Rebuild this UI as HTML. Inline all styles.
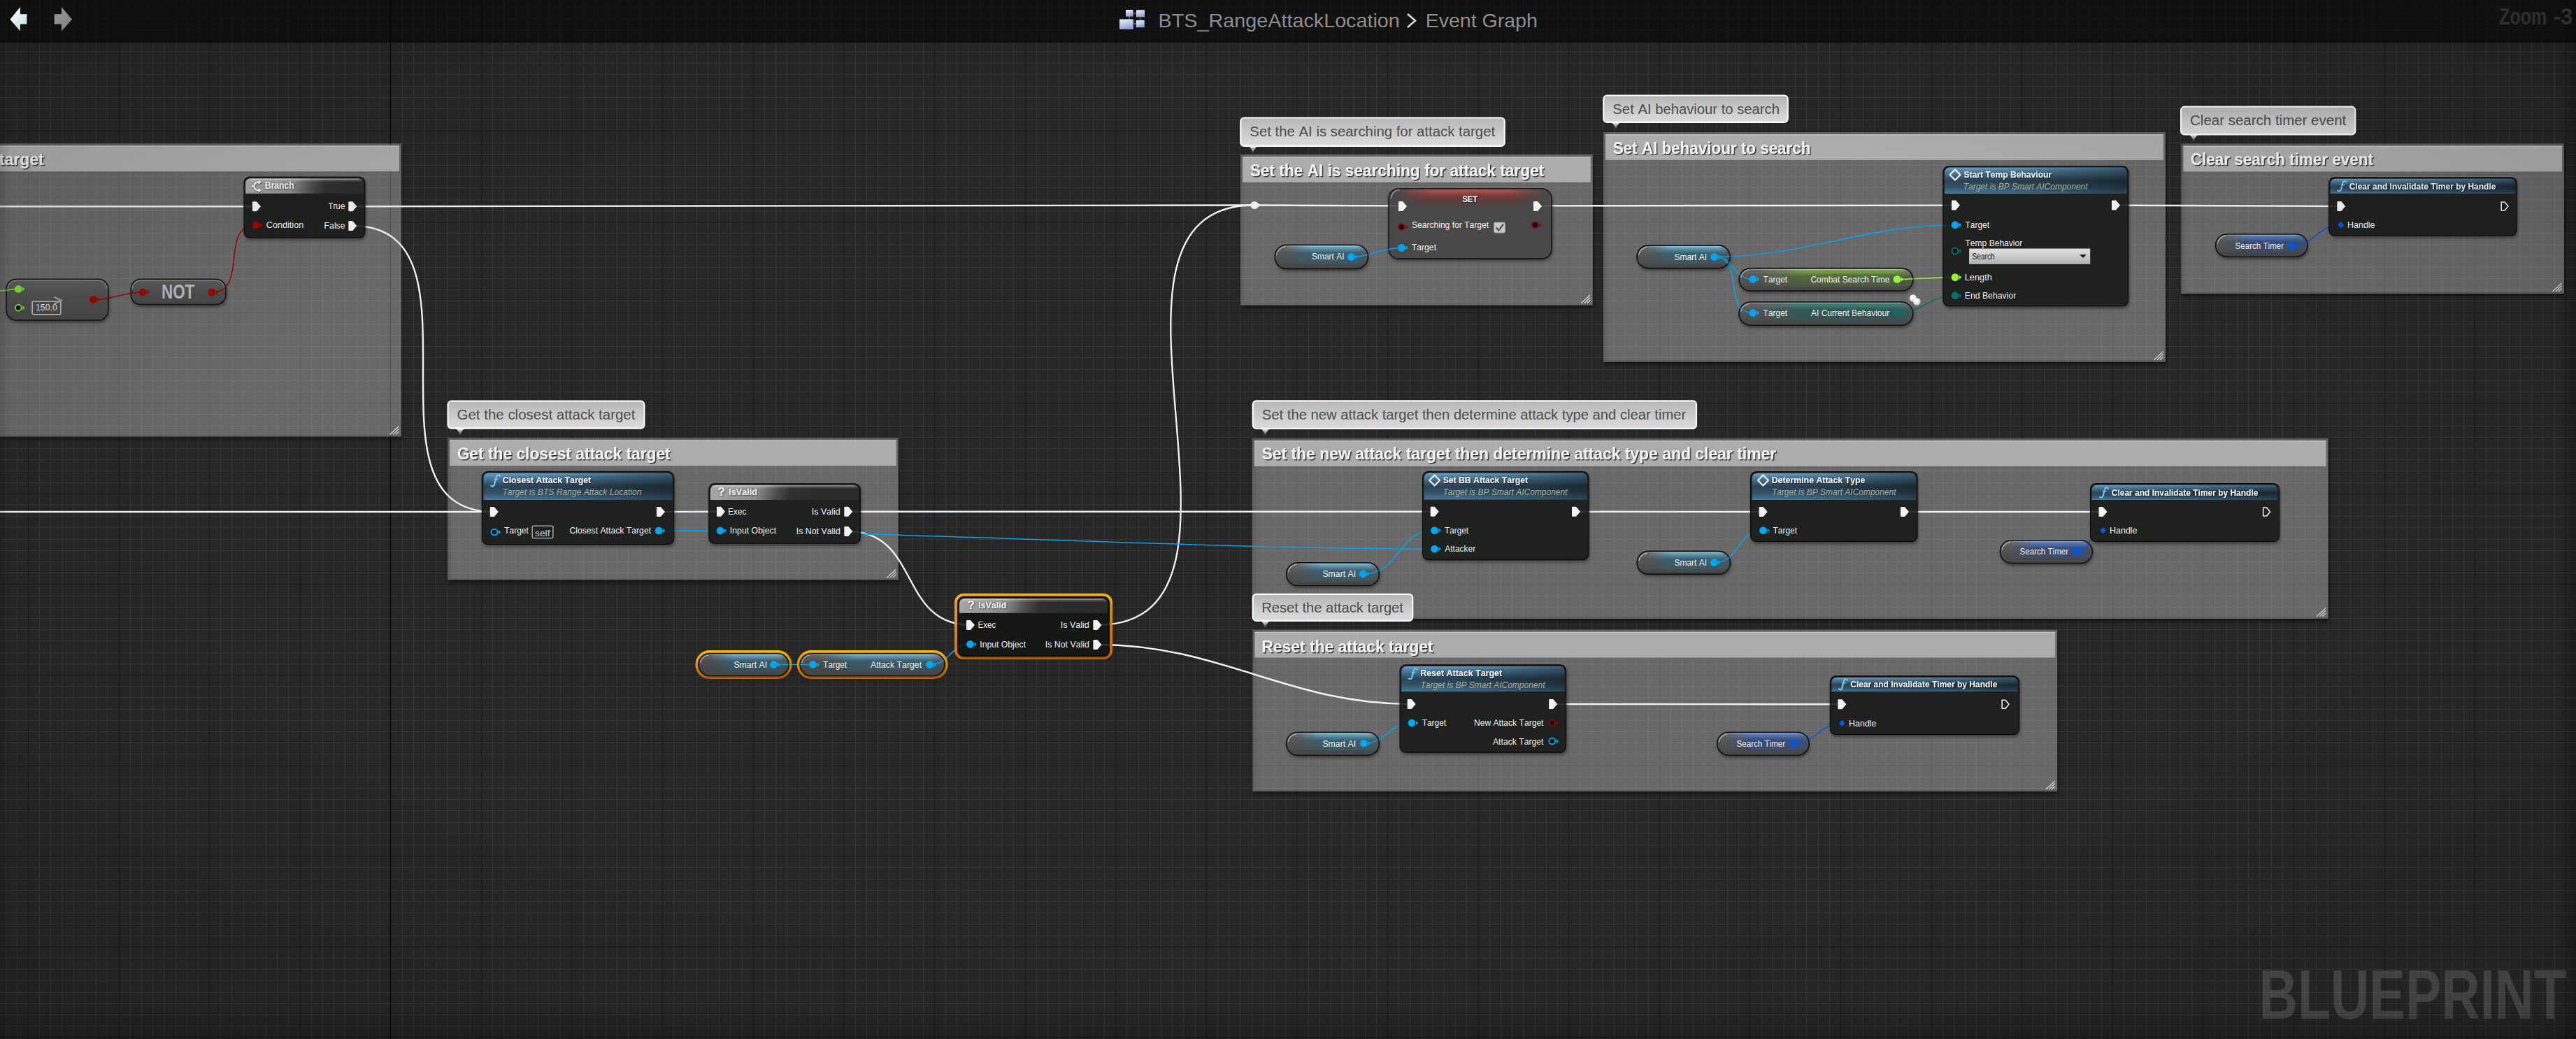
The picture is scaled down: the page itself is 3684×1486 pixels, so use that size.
<!DOCTYPE html><html><head><meta charset="utf-8"><style>html,body{margin:0;padding:0;width:3684px;height:1486px;overflow:hidden;background:#262626}svg{display:block}text{font-family:"Liberation Sans",sans-serif;font-kerning:none}</style></head><body><svg width="3684" height="1486" viewBox="0 0 3684 1486">
<defs>
 <linearGradient id="gBubble" x1="0" y1="0" x2="0" y2="1">
  <stop offset="0" stop-color="#b6b6b6"/><stop offset="1" stop-color="#dddddd"/>
 </linearGradient>
 <linearGradient id="gFunc" x1="0" y1="0" x2="0" y2="1">
  <stop offset="0" stop-color="#6ea6cc"/><stop offset="0.12" stop-color="#5587aa"/>
  <stop offset="0.5" stop-color="#2c4555"/><stop offset="0.75" stop-color="#34536a"/>
  <stop offset="1" stop-color="#4d7997"/>
 </linearGradient>
 <linearGradient id="gFuncH" x1="0" y1="0" x2="1" y2="0">
  <stop offset="0" stop-color="#000" stop-opacity="0"/><stop offset="0.4" stop-color="#000" stop-opacity="0.1"/>
  <stop offset="1" stop-color="#000" stop-opacity="0.42"/>
 </linearGradient>
 <linearGradient id="gPure" x1="0" y1="0" x2="1" y2="0.25">
  <stop offset="0" stop-color="#8c8c8c"/><stop offset="0.22" stop-color="#767676"/>
  <stop offset="0.45" stop-color="#3a3a3a"/><stop offset="0.6" stop-color="#2c2c2c"/>
  <stop offset="1" stop-color="#2a2a2a"/>
 </linearGradient>
 <linearGradient id="gTopHi" x1="0" y1="0" x2="0" y2="1">
  <stop offset="0" stop-color="#fff" stop-opacity="0.35"/><stop offset="0.25" stop-color="#fff" stop-opacity="0"/>
 </linearGradient>
 <linearGradient id="gCompact" x1="0" y1="0" x2="0" y2="1">
  <stop offset="0" stop-color="#5a5a5a"/><stop offset="0.5" stop-color="#4a4a4a"/><stop offset="1" stop-color="#424242"/>
 </linearGradient>
 <linearGradient id="gVar" x1="0" y1="0" x2="0" y2="1">
  <stop offset="0" stop-color="#6c6c6c"/><stop offset="0.35" stop-color="#535353"/><stop offset="1" stop-color="#434343"/>
 </linearGradient>
 <linearGradient id="gHoriz" x1="0" y1="0" x2="1" y2="0">
  <stop offset="0" stop-color="#fff" stop-opacity="0"/><stop offset="0.1" stop-color="#fff" stop-opacity="0.05"/><stop offset="0.38" stop-color="#fff" stop-opacity="1"/>
  <stop offset="0.9" stop-color="#fff" stop-opacity="1"/><stop offset="1" stop-color="#fff" stop-opacity="0.4"/>
 </linearGradient>
 <mask id="mHoriz" maskContentUnits="objectBoundingBox"><rect width="1" height="1" fill="url(#gHoriz)"/></mask>
 <linearGradient id="gSetH" x1="0" y1="0" x2="1" y2="0">
  <stop offset="0" stop-color="#fff" stop-opacity="0"/><stop offset="0.25" stop-color="#fff" stop-opacity="1"/>
  <stop offset="0.75" stop-color="#fff" stop-opacity="1"/><stop offset="1" stop-color="#fff" stop-opacity="0"/>
 </linearGradient>
 <mask id="mSetH" maskContentUnits="objectBoundingBox"><rect width="1" height="1" fill="url(#gSetH)"/></mask>
 <radialGradient id="gSet" cx="0.5" cy="0" r="0.6" fx="0.5" fy="0">
  <stop offset="0" stop-color="#b84848"/><stop offset="0.5" stop-color="#7a3030"/><stop offset="1" stop-color="#3c3c3c" stop-opacity="0"/>
 </radialGradient>
 <linearGradient id="gOrange" x1="0" y1="0" x2="0" y2="1">
  <stop offset="0" stop-color="#f7b400"/><stop offset="1" stop-color="#e27400"/>
 </linearGradient>
 <filter id="fShadow" x="-10%" y="-10%" width="120%" height="130%">
  <feGaussianBlur stdDeviation="2.5"/>
 </filter>
 <filter id="fNodeTxt" x="-10%" y="-30%" width="130%" height="170%">
  <feDropShadow dx="0.8" dy="1" stdDeviation="1.2" flood-color="#000" flood-opacity="0.55"/>
 </filter>
 <filter id="fTxtSh" x="-5%" y="-20%" width="110%" height="150%">
  <feDropShadow dx="1.5" dy="1.5" stdDeviation="0.6" flood-color="#222" flood-opacity="0.9"/>
 </filter>
</defs>
<rect width="3684" height="1486" fill="#262626"/>
<path d="M8.5,0V1486M24.5,0V1486M56.5,0V1486M72.5,0V1486M89.5,0V1486M105.5,0V1486M121.5,0V1486M137.5,0V1486M153.5,0V1486M186.5,0V1486M202.5,0V1486M218.5,0V1486M234.5,0V1486M251.5,0V1486M267.5,0V1486M283.5,0V1486M315.5,0V1486M331.5,0V1486M348.5,0V1486M364.5,0V1486M380.5,0V1486M396.5,0V1486M412.5,0V1486M445.5,0V1486M461.5,0V1486M477.5,0V1486M493.5,0V1486M510.5,0V1486M526.5,0V1486M542.5,0V1486M575.5,0V1486M591.5,0V1486M607.5,0V1486M623.5,0V1486M639.5,0V1486M656.5,0V1486M672.5,0V1486M704.5,0V1486M720.5,0V1486M737.5,0V1486M753.5,0V1486M769.5,0V1486M785.5,0V1486M801.5,0V1486M834.5,0V1486M850.5,0V1486M866.5,0V1486M882.5,0V1486M898.5,0V1486M915.5,0V1486M931.5,0V1486M963.5,0V1486M979.5,0V1486M996.5,0V1486M1012.5,0V1486M1028.5,0V1486M1044.5,0V1486M1061.5,0V1486M1093.5,0V1486M1109.5,0V1486M1125.5,0V1486M1142.5,0V1486M1158.5,0V1486M1174.5,0V1486M1190.5,0V1486M1223.5,0V1486M1239.5,0V1486M1255.5,0V1486M1271.5,0V1486M1287.5,0V1486M1304.5,0V1486M1320.5,0V1486M1352.5,0V1486M1368.5,0V1486M1385.5,0V1486M1401.5,0V1486M1417.5,0V1486M1433.5,0V1486M1449.5,0V1486M1482.5,0V1486M1498.5,0V1486M1514.5,0V1486M1530.5,0V1486M1547.5,0V1486M1563.5,0V1486M1579.5,0V1486M1611.5,0V1486M1628.5,0V1486M1644.5,0V1486M1660.5,0V1486M1676.5,0V1486M1692.5,0V1486M1709.5,0V1486M1741.5,0V1486M1757.5,0V1486M1773.5,0V1486M1790.5,0V1486M1806.5,0V1486M1822.5,0V1486M1838.5,0V1486M1871.5,0V1486M1887.5,0V1486M1903.5,0V1486M1919.5,0V1486M1935.5,0V1486M1952.5,0V1486M1968.5,0V1486M2000.5,0V1486M2016.5,0V1486M2033.5,0V1486M2049.5,0V1486M2065.5,0V1486M2081.5,0V1486M2097.5,0V1486M2130.5,0V1486M2146.5,0V1486M2162.5,0V1486M2178.5,0V1486M2195.5,0V1486M2211.5,0V1486M2227.5,0V1486M2259.5,0V1486M2276.5,0V1486M2292.5,0V1486M2308.5,0V1486M2324.5,0V1486M2340.5,0V1486M2357.5,0V1486M2389.5,0V1486M2405.5,0V1486M2421.5,0V1486M2438.5,0V1486M2454.5,0V1486M2470.5,0V1486M2486.5,0V1486M2519.5,0V1486M2535.5,0V1486M2551.5,0V1486M2567.5,0V1486M2583.5,0V1486M2600.5,0V1486M2616.5,0V1486M2648.5,0V1486M2664.5,0V1486M2681.5,0V1486M2697.5,0V1486M2713.5,0V1486M2729.5,0V1486M2745.5,0V1486M2778.5,0V1486M2794.5,0V1486M2810.5,0V1486M2826.5,0V1486M2843.5,0V1486M2859.5,0V1486M2875.5,0V1486M2907.5,0V1486M2924.5,0V1486M2940.5,0V1486M2956.5,0V1486M2972.5,0V1486M2988.5,0V1486M3005.5,0V1486M3037.5,0V1486M3053.5,0V1486M3069.5,0V1486M3086.5,0V1486M3102.5,0V1486M3118.5,0V1486M3134.5,0V1486M3167.5,0V1486M3183.5,0V1486M3199.5,0V1486M3215.5,0V1486M3231.5,0V1486M3248.5,0V1486M3264.5,0V1486M3296.5,0V1486M3312.5,0V1486M3329.5,0V1486M3345.5,0V1486M3361.5,0V1486M3377.5,0V1486M3393.5,0V1486M3426.5,0V1486M3442.5,0V1486M3458.5,0V1486M3474.5,0V1486M3491.5,0V1486M3507.5,0V1486M3523.5,0V1486M3555.5,0V1486M3572.5,0V1486M3588.5,0V1486M3604.5,0V1486M3620.5,0V1486M3636.5,0V1486M3653.5,0V1486M0,9.5H3684M0,25.5H3684M0,42.5H3684M0,74.5H3684M0,90.5H3684M0,106.5H3684M0,123.5H3684M0,139.5H3684M0,155.5H3684M0,171.5H3684M0,204.5H3684M0,220.5H3684M0,236.5H3684M0,252.5H3684M0,268.5H3684M0,285.5H3684M0,301.5H3684M0,333.5H3684M0,349.5H3684M0,366.5H3684M0,382.5H3684M0,398.5H3684M0,414.5H3684M0,430.5H3684M0,463.5H3684M0,479.5H3684M0,495.5H3684M0,511.5H3684M0,528.5H3684M0,544.5H3684M0,560.5H3684M0,592.5H3684M0,609.5H3684M0,625.5H3684M0,641.5H3684M0,657.5H3684M0,673.5H3684M0,690.5H3684M0,722.5H3684M0,738.5H3684M0,754.5H3684M0,771.5H3684M0,787.5H3684M0,803.5H3684M0,819.5H3684M0,852.5H3684M0,868.5H3684M0,884.5H3684M0,900.5H3684M0,916.5H3684M0,933.5H3684M0,949.5H3684M0,981.5H3684M0,997.5H3684M0,1014.5H3684M0,1030.5H3684M0,1046.5H3684M0,1062.5H3684M0,1078.5H3684M0,1111.5H3684M0,1127.5H3684M0,1143.5H3684M0,1159.5H3684M0,1176.5H3684M0,1192.5H3684M0,1208.5H3684M0,1240.5H3684M0,1257.5H3684M0,1273.5H3684M0,1289.5H3684M0,1305.5H3684M0,1321.5H3684M0,1338.5H3684M0,1370.5H3684M0,1386.5H3684M0,1402.5H3684M0,1419.5H3684M0,1435.5H3684M0,1451.5H3684M0,1467.5H3684" stroke="#353535" stroke-width="1" fill="none" shape-rendering="crispEdges"/>
<path d="M40.5,0V1486M170.5,0V1486M299.5,0V1486M429.5,0V1486M558.5,0V1486M688.5,0V1486M817.5,0V1486M947.5,0V1486M1077.5,0V1486M1206.5,0V1486M1336.5,0V1486M1466.5,0V1486M1595.5,0V1486M1725.5,0V1486M1854.5,0V1486M1984.5,0V1486M2114.5,0V1486M2243.5,0V1486M2373.5,0V1486M2502.5,0V1486M2632.5,0V1486M2762.5,0V1486M2891.5,0V1486M3021.5,0V1486M3150.5,0V1486M3280.5,0V1486M3410.5,0V1486M3539.5,0V1486M3669.5,0V1486M0,58.5H3684M0,187.5H3684M0,317.5H3684M0,447.5H3684M0,576.5H3684M0,706.5H3684M0,835.5H3684M0,965.5H3684M0,1095.5H3684M0,1224.5H3684M0,1354.5H3684M0,1483.5H3684" stroke="#1a1a1a" stroke-width="1" fill="none" shape-rendering="crispEdges"/>
<path d="M558.5,0V1486" stroke="#060606" stroke-width="1.2" fill="none"/>
<clipPath id="g1"><path clip-rule="evenodd" d="M-40,175.2 H604 V654.6 H-40 Z M-9.99,205.2 H573.99 A0.01,0.01 0 0 1 574,205.20999999999998 V624.59 A0.01,0.01 0 0 1 573.99,624.6 H-9.99 A0.01,0.01 0 0 1 -10,624.59 V205.20999999999998 A0.01,0.01 0 0 1 -9.99,205.2 Z"/></clipPath>
<g clip-path="url(#g1)"><rect x="-9" y="208.2" width="584" height="419.40000000000003" rx="0.01" fill="#000" opacity="0.55" filter="url(#fShadow)"/></g>
<rect x="-10" y="205.2" width="584" height="419.40000000000003" fill="#fff" fill-opacity="0.305"/>
<rect x="-10" y="205.2" width="5" height="419.40000000000003" fill="#000" fill-opacity="0.07"/>
<rect x="-5" y="622.1" width="579" height="2.5" fill="#000" fill-opacity="0.08"/>
<rect x="-10" y="205.2" width="584" height="3.2" fill="#000" fill-opacity="0.08"/>
<rect x="-7" y="208.39999999999998" width="578" height="36.7" fill="#acacac"/>
<rect x="-7" y="208.39999999999998" width="578" height="1.2" fill="#c6c6c6"/>
<path d="M557.5,621.6 L570.5,609.6 M562.0,621.6 L570.5,613.1 M566.0,621.6 L570.5,617.1" stroke="#e0e0e0" stroke-width="1.3" opacity="0.85"/>
<text x="-1.28" y="236.20" font-size="24.13" font-weight="bold" textLength="64.06" lengthAdjust="spacingAndGlyphs" fill="#f2f2f2" filter="url(#fTxtSh)">target</text>
<clipPath id="g2"><path clip-rule="evenodd" d="M1744,190.8 H2307.8 V466.7 H1744 Z M1774.01,220.8 H2277.79 A0.01,0.01 0 0 1 2277.8,220.81 V436.69 A0.01,0.01 0 0 1 2277.79,436.7 H1774.01 A0.01,0.01 0 0 1 1774,436.69 V220.81 A0.01,0.01 0 0 1 1774.01,220.8 Z"/></clipPath>
<g clip-path="url(#g2)"><rect x="1775" y="223.8" width="503.8000000000002" height="215.89999999999998" rx="0.01" fill="#000" opacity="0.55" filter="url(#fShadow)"/></g>
<rect x="1774" y="220.8" width="503.8000000000002" height="215.89999999999998" fill="#fff" fill-opacity="0.305"/>
<rect x="1774" y="220.8" width="5" height="215.89999999999998" fill="#000" fill-opacity="0.07"/>
<rect x="1779" y="434.2" width="498.8000000000002" height="2.5" fill="#000" fill-opacity="0.08"/>
<rect x="1774" y="220.8" width="503.8000000000002" height="3.2" fill="#000" fill-opacity="0.08"/>
<rect x="1777" y="224.0" width="497.8000000000002" height="36.7" fill="#acacac"/>
<rect x="1777" y="224.0" width="497.8000000000002" height="1.2" fill="#c6c6c6"/>
<path d="M2261.3,433.7 L2274.3,421.7 M2265.8,433.7 L2274.3,425.2 M2269.8,433.7 L2274.3,429.2" stroke="#e0e0e0" stroke-width="1.3" opacity="0.85"/>
<text x="1787.65" y="251.80" font-size="24.13" font-weight="bold" textLength="420.53" lengthAdjust="spacingAndGlyphs" fill="#f2f2f2" filter="url(#fTxtSh)">Set the AI is searching for attack target</text>
<clipPath id="g3"><path clip-rule="evenodd" d="M2263,159 H3127 V547.7 H2263 Z M2293.01,189 H3096.99 A0.01,0.01 0 0 1 3097,189.01 V517.69 A0.01,0.01 0 0 1 3096.99,517.7 H2293.01 A0.01,0.01 0 0 1 2293,517.69 V189.01 A0.01,0.01 0 0 1 2293.01,189 Z"/></clipPath>
<g clip-path="url(#g3)"><rect x="2294" y="192" width="804" height="328.70000000000005" rx="0.01" fill="#000" opacity="0.55" filter="url(#fShadow)"/></g>
<rect x="2293" y="189" width="804" height="328.70000000000005" fill="#fff" fill-opacity="0.305"/>
<rect x="2293" y="189" width="5" height="328.70000000000005" fill="#000" fill-opacity="0.07"/>
<rect x="2298" y="515.2" width="799" height="2.5" fill="#000" fill-opacity="0.08"/>
<rect x="2293" y="189" width="804" height="3.2" fill="#000" fill-opacity="0.08"/>
<rect x="2296" y="192.2" width="798" height="36.7" fill="#acacac"/>
<rect x="2296" y="192.2" width="798" height="1.2" fill="#c6c6c6"/>
<path d="M3080.5,514.7 L3093.5,502.70000000000005 M3085.0,514.7 L3093.5,506.20000000000005 M3089.0,514.7 L3093.5,510.20000000000005" stroke="#e0e0e0" stroke-width="1.3" opacity="0.85"/>
<text x="2306.65" y="219.90" font-size="24.13" font-weight="bold" textLength="282.84" lengthAdjust="spacingAndGlyphs" fill="#f2f2f2" filter="url(#fTxtSh)">Set AI behaviour to search</text>
<clipPath id="g4"><path clip-rule="evenodd" d="M3089.4,175.5 H3697 V450 H3089.4 Z M3119.4100000000003,205.5 H3666.99 A0.01,0.01 0 0 1 3667,205.51 V419.99 A0.01,0.01 0 0 1 3666.99,420 H3119.4100000000003 A0.01,0.01 0 0 1 3119.4,419.99 V205.51 A0.01,0.01 0 0 1 3119.4100000000003,205.5 Z"/></clipPath>
<g clip-path="url(#g4)"><rect x="3120.4" y="208.5" width="547.5999999999999" height="214.5" rx="0.01" fill="#000" opacity="0.55" filter="url(#fShadow)"/></g>
<rect x="3119.4" y="205.5" width="547.5999999999999" height="214.5" fill="#fff" fill-opacity="0.305"/>
<rect x="3119.4" y="205.5" width="5" height="214.5" fill="#000" fill-opacity="0.07"/>
<rect x="3124.4" y="417.5" width="542.5999999999999" height="2.5" fill="#000" fill-opacity="0.08"/>
<rect x="3119.4" y="205.5" width="547.5999999999999" height="3.2" fill="#000" fill-opacity="0.08"/>
<rect x="3122.4" y="208.7" width="541.5999999999999" height="36.7" fill="#acacac"/>
<rect x="3122.4" y="208.7" width="541.5999999999999" height="1.2" fill="#c6c6c6"/>
<path d="M3650.5,417 L3663.5,405 M3655.0,417 L3663.5,408.5 M3659.0,417 L3663.5,412.5" stroke="#e0e0e0" stroke-width="1.3" opacity="0.85"/>
<text x="3132.78" y="236.20" font-size="24.13" font-weight="bold" textLength="261.20" lengthAdjust="spacingAndGlyphs" fill="#f2f2f2" filter="url(#fTxtSh)">Clear search timer event</text>
<clipPath id="g5"><path clip-rule="evenodd" d="M610.3,596.2 H1314.7 V859.4 H610.3 Z M640.31,626.2 H1284.69 A0.01,0.01 0 0 1 1284.7,626.21 V829.39 A0.01,0.01 0 0 1 1284.69,829.4 H640.31 A0.01,0.01 0 0 1 640.3,829.39 V626.21 A0.01,0.01 0 0 1 640.31,626.2 Z"/></clipPath>
<g clip-path="url(#g5)"><rect x="641.3" y="629.2" width="644.4000000000001" height="203.19999999999993" rx="0.01" fill="#000" opacity="0.55" filter="url(#fShadow)"/></g>
<rect x="640.3" y="626.2" width="644.4000000000001" height="203.19999999999993" fill="#fff" fill-opacity="0.305"/>
<rect x="640.3" y="626.2" width="5" height="203.19999999999993" fill="#000" fill-opacity="0.07"/>
<rect x="645.3" y="826.9" width="639.4000000000001" height="2.5" fill="#000" fill-opacity="0.08"/>
<rect x="640.3" y="626.2" width="644.4000000000001" height="3.2" fill="#000" fill-opacity="0.08"/>
<rect x="643.3" y="629.4000000000001" width="638.4000000000001" height="36.7" fill="#acacac"/>
<rect x="643.3" y="629.4000000000001" width="638.4000000000001" height="1.2" fill="#c6c6c6"/>
<path d="M1268.2,826.4 L1281.2,814.4 M1272.7,826.4 L1281.2,817.9 M1276.7,826.4 L1281.2,821.9" stroke="#e0e0e0" stroke-width="1.3" opacity="0.85"/>
<text x="653.67" y="656.90" font-size="24.13" font-weight="bold" textLength="305.01" lengthAdjust="spacingAndGlyphs" fill="#f2f2f2" filter="url(#fTxtSh)">Get the closest attack target</text>
<clipPath id="g6"><path clip-rule="evenodd" d="M1760.8,597 H3359.5 V914.8 H1760.8 Z M1790.81,627 H3329.49 A0.01,0.01 0 0 1 3329.5,627.01 V884.79 A0.01,0.01 0 0 1 3329.49,884.8 H1790.81 A0.01,0.01 0 0 1 1790.8,884.79 V627.01 A0.01,0.01 0 0 1 1790.81,627 Z"/></clipPath>
<g clip-path="url(#g6)"><rect x="1791.8" y="630" width="1538.7" height="257.79999999999995" rx="0.01" fill="#000" opacity="0.55" filter="url(#fShadow)"/></g>
<rect x="1790.8" y="627" width="1538.7" height="257.79999999999995" fill="#fff" fill-opacity="0.305"/>
<rect x="1790.8" y="627" width="5" height="257.79999999999995" fill="#000" fill-opacity="0.07"/>
<rect x="1795.8" y="882.3" width="1533.7" height="2.5" fill="#000" fill-opacity="0.08"/>
<rect x="1790.8" y="627" width="1538.7" height="3.2" fill="#000" fill-opacity="0.08"/>
<rect x="1793.8" y="630.2" width="1532.7" height="36.7" fill="#acacac"/>
<rect x="1793.8" y="630.2" width="1532.7" height="1.2" fill="#c6c6c6"/>
<path d="M3313.0,881.8 L3326.0,869.8 M3317.5,881.8 L3326.0,873.3 M3321.5,881.8 L3326.0,877.3" stroke="#e0e0e0" stroke-width="1.3" opacity="0.85"/>
<text x="1804.44" y="657.40" font-size="24.13" font-weight="bold" textLength="735.71" lengthAdjust="spacingAndGlyphs" fill="#f2f2f2" filter="url(#fTxtSh)">Set the new attack target then determine attack type and clear timer</text>
<clipPath id="g7"><path clip-rule="evenodd" d="M1761.5,870.6 H2972.2 V1162 H1761.5 Z M1791.51,900.6 H2942.1899999999996 A0.01,0.01 0 0 1 2942.2,900.61 V1131.99 A0.01,0.01 0 0 1 2942.1899999999996,1132 H1791.51 A0.01,0.01 0 0 1 1791.5,1131.99 V900.61 A0.01,0.01 0 0 1 1791.51,900.6 Z"/></clipPath>
<g clip-path="url(#g7)"><rect x="1792.5" y="903.6" width="1150.6999999999998" height="231.39999999999998" rx="0.01" fill="#000" opacity="0.55" filter="url(#fShadow)"/></g>
<rect x="1791.5" y="900.6" width="1150.6999999999998" height="231.39999999999998" fill="#fff" fill-opacity="0.305"/>
<rect x="1791.5" y="900.6" width="5" height="231.39999999999998" fill="#000" fill-opacity="0.07"/>
<rect x="1796.5" y="1129.5" width="1145.6999999999998" height="2.5" fill="#000" fill-opacity="0.08"/>
<rect x="1791.5" y="900.6" width="1150.6999999999998" height="3.2" fill="#000" fill-opacity="0.08"/>
<rect x="1794.5" y="903.8000000000001" width="1144.6999999999998" height="36.7" fill="#acacac"/>
<rect x="1794.5" y="903.8000000000001" width="1144.6999999999998" height="1.2" fill="#c6c6c6"/>
<path d="M2925.7,1129 L2938.7,1117 M2930.2,1129 L2938.7,1120.5 M2934.2,1129 L2938.7,1124.5" stroke="#e0e0e0" stroke-width="1.3" opacity="0.85"/>
<text x="1804.27" y="932.80" font-size="24.13" font-weight="bold" textLength="245.41" lengthAdjust="spacingAndGlyphs" fill="#f2f2f2" filter="url(#fTxtSh)">Reset the attack target</text>
<path d="M-5.0,295.2 C119.0,295.2 243.0,295.2 367.0,295.2" stroke="#f0f0f0" stroke-width="2.4" fill="none"/>
<path d="M504.0,295.2 C837.9,295.2 1460.1,293.5 1794.0,293.5" stroke="#f0f0f0" stroke-width="2.4" fill="none"/>
<path d="M1794.0,293.5 C1865.0,293.5 1935.0,294.4 2006.0,294.4" stroke="#f0f0f0" stroke-width="2.4" fill="none"/>
<path d="M2199.0,294.4 C2398.6,294.4 2597.4,293.6 2797.0,293.6" stroke="#f0f0f0" stroke-width="2.4" fill="none"/>
<path d="M3026.0,293.6 C3133.8,293.6 3240.2,295.0 3348.0,295.0" stroke="#f0f0f0" stroke-width="2.4" fill="none"/>
<path d="M504.0,323.0 C707.7,323.0 502.3,732.0 706.0,732.0" stroke="#f0f0f0" stroke-width="2.4" fill="none"/>
<path d="M-5.0,732.0 C232.0,732.0 469.0,732.0 706.0,732.0" stroke="#f0f0f0" stroke-width="2.4" fill="none"/>
<path d="M945.0,732.0 C973.8,732.0 1002.2,731.7 1031.0,731.7" stroke="#f0f0f0" stroke-width="2.4" fill="none"/>
<path d="M1213.0,731.7 C1492.6,731.7 1772.1,731.8 2051.7,731.8" stroke="#f0f0f0" stroke-width="2.4" fill="none"/>
<path d="M2254.0,731.8 C2343.3,731.8 2432.4,732.0 2521.7,732.0" stroke="#f0f0f0" stroke-width="2.4" fill="none"/>
<path d="M2724.0,732.0 C2818.5,732.0 2913.0,732.0 3007.5,732.0" stroke="#f0f0f0" stroke-width="2.4" fill="none"/>
<path d="M1213.0,760.0 C1316.0,760.0 1285.0,893.9 1388.0,893.9" stroke="#f0f0f0" stroke-width="2.4" fill="none"/>
<path d="M1569.0,893.9 C1844.1,893.9 1518.9,293.5 1794.0,293.5" stroke="#f0f0f0" stroke-width="2.4" fill="none"/>
<path d="M1569.0,922.0 C1747.2,922.0 1840.5,1007.0 2018.7,1007.0" stroke="#f0f0f0" stroke-width="2.4" fill="none"/>
<path d="M2221.0,1007.0 C2358.9,1007.0 2496.5,1007.3 2634.4,1007.3" stroke="#f0f0f0" stroke-width="2.4" fill="none"/>
<path d="M-5.0,416.3 C6.4,416.3 14.9,413.4 26.3,413.4" stroke="#7fd43a" stroke-width="1.6" fill="none"/>
<path d="M133.6,428.4 C160.6,428.4 177.3,418.0 204.3,418.0" stroke="#9a0606" stroke-width="1.6" fill="none"/>
<path d="M303.0,418.0 C356.0,418.0 313.0,322.0 366.0,322.0" stroke="#9a0606" stroke-width="1.6" fill="none"/>
<path d="M942.1,759.0 C971.4,759.0 1000.7,759.0 1030.0,759.0" stroke="#0aa0e6" stroke-width="1.6" fill="none"/>
<path d="M942.1,759.0 C1284.1,759.0 1709.6,785.1 2051.6,785.1" stroke="#0aa0e6" stroke-width="1.6" fill="none"/>
<path d="M1932.4,367.5 C1960.8,367.5 1976.1,354.4 2004.5,354.4" stroke="#0aa0e6" stroke-width="1.6" fill="none"/>
<path d="M2451.7,367.4 C2581.7,367.4 2666.0,321.7 2796.0,321.7" stroke="#0aa0e6" stroke-width="1.6" fill="none"/>
<path d="M2451.7,367.4 C2480.8,367.4 2477.9,399.4 2507.0,399.4" stroke="#0aa0e6" stroke-width="1.6" fill="none"/>
<path d="M2451.7,367.4 C2496.8,367.4 2461.9,447.5 2507.0,447.5" stroke="#0aa0e6" stroke-width="1.6" fill="none"/>
<path d="M2713.0,399.4 C2741.6,399.4 2767.4,396.6 2796.0,396.6" stroke="#9bee3c" stroke-width="1.6" fill="none"/>
<path d="M2713.0,447.5 C2748.9,447.5 2760.1,422.7 2796.0,422.7" stroke="#0a6f66" stroke-width="1.6" fill="none"/>
<path d="M3277.6,351.4 C3310.9,351.4 3314.4,321.6 3347.7,321.6" stroke="#0b55d6" stroke-width="1.6" fill="none"/>
<path d="M1949.2,820.8 C2004.1,820.8 1996.7,758.6 2051.6,758.6" stroke="#0aa0e6" stroke-width="1.6" fill="none"/>
<path d="M2451.5,804.4 C2490.1,804.4 2482.9,758.7 2521.5,758.7" stroke="#0aa0e6" stroke-width="1.6" fill="none"/>
<path d="M2969.7,788.4 C2992.3,788.4 2985.1,758.7 3007.7,758.7" stroke="#0b55d6" stroke-width="1.6" fill="none"/>
<path d="M1950.4,1063.2 C1983.0,1063.2 1986.4,1034.0 2019.0,1034.0" stroke="#0aa0e6" stroke-width="1.6" fill="none"/>
<path d="M2564.7,1063.7 C2597.7,1063.7 2601.3,1034.4 2634.3,1034.4" stroke="#0b55d6" stroke-width="1.6" fill="none"/>
<path d="M1106.7,950.5 C1125.3,950.5 1144.0,950.5 1162.6,950.5" stroke="#0aa0e6" stroke-width="1.6" fill="none"/>
<path d="M1329.8,950.5 C1358.7,950.5 1358.6,921.4 1387.5,921.4" stroke="#0aa0e6" stroke-width="1.6" fill="none"/>
<clipPath id="g8"><path clip-rule="evenodd" d="M-20.8,369.2 H184.8 V487.9 H-20.8 Z M23.2,399.2 H140.8 A14,14 0 0 1 154.8,413.2 V443.9 A14,14 0 0 1 140.8,457.9 H23.2 A14,14 0 0 1 9.2,443.9 V413.2 A14,14 0 0 1 23.2,399.2 Z"/></clipPath>
<g clip-path="url(#g8)"><rect x="10.2" y="402.2" width="145.60000000000002" height="58.69999999999999" rx="14" fill="#000" opacity="0.5" filter="url(#fShadow)"/></g>
<rect x="9.2" y="399.2" width="145.60000000000002" height="58.69999999999999" rx="14" fill="url(#gCompact)" fill-opacity="0.88" stroke="#121212" stroke-width="1.5"/>
<path d="M11.0,413.2 A12.2,12.2 0 0 1 23.2,401.0 H140.8 A12.2,12.2 0 0 1 153.0,413.2" stroke="#c8c8c8" stroke-width="1" fill="none" opacity="0.55"/>
<circle cx="26.3" cy="413.4" r="5.4" fill="#7ed63a"/>
<path d="M32.3,410.2 L35.6,413.4 L32.3,416.59999999999997 Z" fill="#7ed63a"/>
<circle cx="26.3" cy="440.2" r="4.4" fill="#111" stroke="#7ed63a" stroke-width="2"/>
<path d="M32.3,437.0 L35.6,440.2 L32.3,443.4 Z" fill="#7ed63a"/>
<rect x="46.1" y="431.2" width="40.8" height="18.4" rx="1.5" fill="none" stroke="#cfcfcf" stroke-width="1.3"/>
<text x="50.96" y="443.80" font-size="13.08" font-weight="normal" textLength="30.82" lengthAdjust="spacingAndGlyphs" fill="#e0e0e0" >150.0</text>
<path d="M77.5,424.8 L87.5,429.7 L77.5,434.6" stroke="#a8a8a8" stroke-width="2.6" fill="none" opacity="0.85"/>
<circle cx="133.6" cy="428.4" r="5.4" fill="#9a0606"/>
<path d="M139.6,425.2 L142.9,428.4 L139.6,431.59999999999997 Z" fill="#9a0606"/>
<clipPath id="g9"><path clip-rule="evenodd" d="M157.3,369.2 H352.8 V465.5 H157.3 Z M201.3,399.2 H308.8 A14,14 0 0 1 322.8,413.2 V421.5 A14,14 0 0 1 308.8,435.5 H201.3 A14,14 0 0 1 187.3,421.5 V413.2 A14,14 0 0 1 201.3,399.2 Z"/></clipPath>
<g clip-path="url(#g9)"><rect x="188.3" y="402.2" width="135.5" height="36.30000000000001" rx="14" fill="#000" opacity="0.5" filter="url(#fShadow)"/></g>
<rect x="187.3" y="399.2" width="135.5" height="36.30000000000001" rx="14" fill="url(#gCompact)" fill-opacity="0.88" stroke="#121212" stroke-width="1.5"/>
<path d="M189.10000000000002,413.2 A12.2,12.2 0 0 1 201.3,401.0 H308.8 A12.2,12.2 0 0 1 321.0,413.2" stroke="#c8c8c8" stroke-width="1" fill="none" opacity="0.55"/>
<text x="231.00" y="427.20" font-size="29.80" font-weight="bold" textLength="47.24" lengthAdjust="spacingAndGlyphs" fill="#b8b8b8" >NOT</text>
<circle cx="204.3" cy="418" r="5.4" fill="#9a0606"/>
<path d="M210.3,414.8 L213.60000000000002,418 L210.3,421.2 Z" fill="#9a0606"/>
<circle cx="303" cy="418" r="5.4" fill="#9a0606"/>
<path d="M309,414.8 L312.3,418 L309,421.2 Z" fill="#9a0606"/>
<clipPath id="g10"><path clip-rule="evenodd" d="M319.1,223.2 H551.7 V369.8 H319.1 Z M357.1,253.2 H513.7 A8,8 0 0 1 521.7,261.2 V331.8 A8,8 0 0 1 513.7,339.8 H357.1 A8,8 0 0 1 349.1,331.8 V261.2 A8,8 0 0 1 357.1,253.2 Z"/></clipPath>
<g clip-path="url(#g10)"><rect x="350.1" y="256.2" width="172.60000000000002" height="86.60000000000002" rx="8" fill="#000" opacity="0.5" filter="url(#fShadow)"/></g>
<rect x="349.1" y="253.2" width="172.60000000000002" height="86.60000000000002" rx="8" fill="rgb(19,21,19)" fill-opacity="0.86" stroke="#0c0c0c" stroke-width="1.3"/>
<linearGradient id="g11" gradientUnits="userSpaceOnUse" x1="349.1" y1="253.2" x2="499.1" y2="288.8"><stop offset="0" stop-color="#a8a8a8"/><stop offset="0.45" stop-color="#8c8c8c"/><stop offset="0.62" stop-color="#505050"/><stop offset="0.75" stop-color="#303030"/><stop offset="1" stop-color="#2b2b2b"/></linearGradient>
<path d="M358.1,255.2 H512.7 A7,7 0 0 1 519.7,262.2 V276.8 H351.1 V262.2 A7,7 0 0 1 358.1,255.2 Z" fill="url(#g11)"/>
<path d="M358.1,255.2 H512.7 A7,7 0 0 1 519.7,262.2 V276.8 H351.1 V262.2 A7,7 0 0 1 358.1,255.2 Z" fill="url(#gTopHi)"/>
<path d="M358.1,256.4 H512.7" stroke="#fff" stroke-width="1.2" opacity="0.3"/>
<g filter="url(#fNodeTxt)"><path d="M370,260.5 Q363.6,260.5 363.6,266.3 Q363.6,272.3 370,272.3 M359.8,266.3 H363.6" stroke="#f4f4f4" stroke-width="1.9" fill="none"/><path d="M369.5,257.8 L373.8,260.5 L369.5,263.2 Z M369.5,269.6 L373.8,272.3 L369.5,275 Z" fill="#f4f4f4"/></g>
<text x="378.89" y="270.20" font-size="14.24" font-weight="bold" textLength="41.76" lengthAdjust="spacingAndGlyphs" fill="#f0f0f0" filter="url(#fNodeTxt)">Branch</text>
<path d="M362,288.2 L367,288.2 L373,295.2 L367,302.2 L362,302.2 Q361,302.2 361,301.2 L361,289.2 Q361,288.2 362,288.2 Z" fill="#f2f2f2"/>
<path d="M499.3,288.2 L504.3,288.2 L510.3,295.2 L504.3,302.2 L499.3,302.2 Q498.3,302.2 498.3,301.2 L498.3,289.2 Q498.3,288.2 499.3,288.2 Z" fill="#f2f2f2"/>
<path d="M499.3,316 L504.3,316 L510.3,323 L504.3,330 L499.3,330 Q498.3,330 498.3,329 L498.3,317 Q498.3,316 499.3,316 Z" fill="#f2f2f2"/>
<circle cx="366" cy="322" r="5.4" fill="#9a0606"/>
<path d="M372,318.8 L375.3,322 L372,325.2 Z" fill="#9a0606"/>
<text x="469.23" y="299.40" font-size="13.37" font-weight="normal" textLength="24.29" lengthAdjust="spacingAndGlyphs" fill="#f0f0f0" >True</text>
<text x="380.76" y="325.80" font-size="13.37" font-weight="normal" textLength="53.46" lengthAdjust="spacingAndGlyphs" fill="#f0f0f0" >Condition</text>
<text x="463.60" y="326.50" font-size="13.37" font-weight="normal" textLength="29.95" lengthAdjust="spacingAndGlyphs" fill="#f0f0f0" >False</text>
<circle cx="1794" cy="293.5" r="5.5" fill="#f0f0f0"/>
<path d="M1799,290 L1802,293.5 L1799,297 Z" fill="#f0f0f0"/>
<clipPath id="g12"><path clip-rule="evenodd" d="M1956,239.8 H2249 V400 H1956 Z M2000,269.8 H2205 A14,14 0 0 1 2219,283.8 V356 A14,14 0 0 1 2205,370 H2000 A14,14 0 0 1 1986,356 V283.8 A14,14 0 0 1 2000,269.8 Z"/></clipPath>
<g clip-path="url(#g12)"><rect x="1987" y="272.8" width="233" height="100.19999999999999" rx="14" fill="#000" opacity="0.5" filter="url(#fShadow)"/></g>
<rect x="1986" y="269.8" width="233" height="100.19999999999999" rx="14" fill="#434343" fill-opacity="0.88" stroke="#0c0c0c" stroke-width="1.3"/>
<linearGradient id="gSetV" x1="0" y1="0" x2="0" y2="1"><stop offset="0" stop-color="#c05858" stop-opacity="0.9"/><stop offset="0.35" stop-color="#8a3434" stop-opacity="0.75"/><stop offset="1" stop-color="#5a3030" stop-opacity="0"/></linearGradient>
<clipPath id="cSet"><rect x="1987" y="270.8" width="231" height="98" rx="13"/></clipPath>
<g clip-path="url(#cSet)"><rect x="1992" y="271" width="221" height="27" fill="url(#gSetV)" mask="url(#mSetH)"/></g>
<path d="M1990,284 Q1990,272.5 2002,271.6" stroke="#ddd" stroke-width="1.2" fill="none" opacity="0.6"/>
<text x="2091.38" y="288.80" font-size="12.21" font-weight="bold" textLength="21.64" lengthAdjust="spacingAndGlyphs" fill="#f0f0f0" filter="url(#fNodeTxt)">SET</text>
<path d="M2001,288 L2006,288 L2012,295 L2006,302 L2001,302 Q2000,302 2000,301 L2000,289 Q2000,288 2001,288 Z" fill="#f2f2f2"/>
<path d="M2194,288 L2199,288 L2205,295 L2199,302 L2194,302 Q2193,302 2193,301 L2193,289 Q2193,288 2194,288 Z" fill="#f2f2f2"/>
<circle cx="2004.5" cy="324.7" r="4.4" fill="#111" stroke="#8a0a0a" stroke-width="2"/>
<path d="M2010.5,321.5 L2013.8,324.7 L2010.5,327.9 Z" fill="#8a0a0a"/>
<text x="2018.95" y="325.80" font-size="13.37" font-weight="normal" textLength="110.14" lengthAdjust="spacingAndGlyphs" fill="#f0f0f0" >Searching for Target</text>
<rect x="2136.5" y="318" width="16" height="15" rx="2" fill="#c8c8c8" stroke="#999" stroke-width="1"/>
<path d="M2139.5,325.5 L2143.5,329.5 L2150,320.5" stroke="#555" stroke-width="2.2" fill="none"/>
<circle cx="2195.5" cy="321.8" r="4.4" fill="#111" stroke="#8a0a0a" stroke-width="2"/>
<path d="M2201.5,318.6 L2204.8,321.8 L2201.5,325.0 Z" fill="#8a0a0a"/>
<circle cx="2004.5" cy="354.4" r="5.4" fill="#00a6ef"/>
<path d="M2010.5,351.2 L2013.8,354.4 L2010.5,357.59999999999997 Z" fill="#00a6ef"/>
<text x="2018.73" y="358.40" font-size="13.37" font-weight="normal" textLength="35.36" lengthAdjust="spacingAndGlyphs" fill="#f0f0f0" >Target</text>
<clipPath id="g13"><path clip-rule="evenodd" d="M1793.1,320.2 H1986.4 V414.4 H1793.1 Z M1840.1999999999998,350.2 H1939.3000000000002 A17.099999999999994,17.099999999999994 0 0 1 1956.4,367.29999999999995 V367.29999999999995 A17.099999999999994,17.099999999999994 0 0 1 1939.3000000000002,384.4 H1840.1999999999998 A17.099999999999994,17.099999999999994 0 0 1 1823.1,367.29999999999995 V367.29999999999995 A17.099999999999994,17.099999999999994 0 0 1 1840.1999999999998,350.2 Z"/></clipPath>
<g clip-path="url(#g13)"><rect x="1824.1" y="353.2" width="133.30000000000018" height="34.19999999999999" rx="17.099999999999994" fill="#000" opacity="0.5" filter="url(#fShadow)"/></g>
<clipPath id="g14"><rect x="1823.1" y="350.2" width="133.30000000000018" height="34.19999999999999" rx="17.099999999999994"/></clipPath>
<rect x="1823.1" y="350.2" width="133.30000000000018" height="34.19999999999999" rx="17.099999999999994" fill="url(#gVar)" fill-opacity="0.88"/>
<linearGradient id="g15" x1="0" y1="0" x2="0" y2="1"><stop offset="0" stop-color="rgba(125,190,220,0.95)"/><stop offset="0.4" stop-color="rgba(45,100,125,0.7)"/><stop offset="1" stop-color="rgba(45,100,125,0.7)" stop-opacity="0.45"/></linearGradient>
<g clip-path="url(#g14)"><rect x="1825.1" y="351.2" width="129.30000000000018" height="27.359999999999992" fill="url(#g15)" mask="url(#mHoriz)"/>
<rect x="1823.1" y="377.902" width="133.30000000000018" height="6.4979999999999976" fill="#474747" fill-opacity="0.9"/></g>
<rect x="1823.1" y="350.2" width="133.30000000000018" height="34.19999999999999" rx="17.099999999999994" fill="none" stroke="#121212" stroke-width="1.6"/>
<path d="M1838.49,352.4 Q1827.1,354.7 1825.6999999999998,364.73499999999996" stroke="#e8e8e8" stroke-width="1.1" fill="none" opacity="0.7"/>
<path d="M1840.1999999999998,352.09999999999997 H1939.3000000000002" stroke="#fff" stroke-width="0.9" opacity="0.3"/>
<text x="1875.96" y="371.00" font-size="12.50" font-weight="normal" textLength="46.55" lengthAdjust="spacingAndGlyphs" fill="#f0f0f0" >Smart AI</text>
<circle cx="1932.4" cy="367.5" r="5.4" fill="#00a6ef"/>
<path d="M1938.4,364.3 L1941.7,367.5 L1938.4,370.7 Z" fill="#00a6ef"/>
<clipPath id="g16"><path clip-rule="evenodd" d="M2749,207.6 H3073.6 V467.7 H2749 Z M2787,237.6 H3035.6 A8,8 0 0 1 3043.6,245.6 V429.7 A8,8 0 0 1 3035.6,437.7 H2787 A8,8 0 0 1 2779,429.7 V245.6 A8,8 0 0 1 2787,237.6 Z"/></clipPath>
<g clip-path="url(#g16)"><rect x="2780" y="240.6" width="264.5999999999999" height="200.1" rx="8" fill="#000" opacity="0.5" filter="url(#fShadow)"/></g>
<rect x="2779" y="237.6" width="264.5999999999999" height="200.1" rx="8" fill="rgb(19,21,19)" fill-opacity="0.86" stroke="#0c0c0c" stroke-width="1.3"/>
<path d="M2788,239.6 H3034.6 A7,7 0 0 1 3041.6,246.6 V277 H2781 V246.6 A7,7 0 0 1 2788,239.6 Z" fill="url(#gFunc)"/>
<path d="M2788,239.6 H3034.6 A7,7 0 0 1 3041.6,246.6 V277 H2781 V246.6 A7,7 0 0 1 2788,239.6 Z" fill="url(#gFuncH)"/>
<path d="M2796,242.5 L2803.5,250 L2796,257.5 L2788.5,250 Z" fill="none" stroke="#f0f0f0" stroke-width="2.2" stroke-linejoin="round"/>
<text x="2808.45" y="254.00" font-size="13.66" font-weight="bold" textLength="125.73" lengthAdjust="spacingAndGlyphs" fill="#f0f0f0" filter="url(#fNodeTxt)">Start Temp Behaviour</text>
<text x="2807.72" y="271.00" font-size="12.65" font-weight="normal" font-style="italic" textLength="177.86" lengthAdjust="spacingAndGlyphs" fill="#a8ae92" >Target is BP Smart AIComponent</text>
<path d="M2792,286.6 L2797,286.6 L2803,293.6 L2797,300.6 L2792,300.6 Q2791,300.6 2791,299.6 L2791,287.6 Q2791,286.6 2792,286.6 Z" fill="#f2f2f2"/>
<path d="M3021,286.6 L3026,286.6 L3032,293.6 L3026,300.6 L3021,300.6 Q3020,300.6 3020,299.6 L3020,287.6 Q3020,286.6 3021,286.6 Z" fill="#f2f2f2"/>
<circle cx="2796" cy="321.7" r="5.4" fill="#00a6ef"/>
<path d="M2802,318.5 L2805.3,321.7 L2802,324.9 Z" fill="#00a6ef"/>
<text x="2810.53" y="326.00" font-size="13.37" font-weight="normal" textLength="34.56" lengthAdjust="spacingAndGlyphs" fill="#f0f0f0" >Target</text>
<text x="2810.53" y="351.50" font-size="13.37" font-weight="normal" textLength="81.67" lengthAdjust="spacingAndGlyphs" fill="#f0f0f0" >Temp Behavior</text>
<circle cx="2796" cy="359" r="4.4" fill="#111" stroke="#0a6f66" stroke-width="2"/>
<path d="M2802,355.8 L2805.3,359 L2802,362.2 Z" fill="#0a6f66"/>
<linearGradient id="gDrop" x1="0" y1="0" x2="0" y2="1"><stop offset="0" stop-color="#e2e2e2"/><stop offset="1" stop-color="#b2b2b2"/></linearGradient><rect x="2816.7" y="356" width="172" height="21" fill="url(#gDrop)" stroke="#d8d8d8" stroke-width="1"/>
<text x="2820.54" y="370.50" font-size="12.50" font-weight="normal" textLength="32.12" lengthAdjust="spacingAndGlyphs" fill="#202020" >Search</text>
<path d="M2974,364 L2984,364 L2979,369 Z" fill="#222"/>
<circle cx="2796" cy="396.6" r="5.4" fill="#9bee3c"/>
<path d="M2802,393.40000000000003 L2805.3,396.6 L2802,399.8 Z" fill="#9bee3c"/>
<text x="2809.75" y="400.60" font-size="13.37" font-weight="normal" textLength="39.08" lengthAdjust="spacingAndGlyphs" fill="#f0f0f0" >Length</text>
<circle cx="2796" cy="422.7" r="5.4" fill="#0a6f66"/>
<path d="M2802,419.5 L2805.3,422.7 L2802,425.9 Z" fill="#0a6f66"/>
<text x="2809.80" y="426.70" font-size="13.37" font-weight="normal" textLength="73.41" lengthAdjust="spacingAndGlyphs" fill="#f0f0f0" >End Behavior</text>
<clipPath id="g17"><path clip-rule="evenodd" d="M2311,320.9 H2504 V413.6 H2311 Z M2357.35,350.9 H2457.65 A16.350000000000023,16.350000000000023 0 0 1 2474,367.25 V367.25 A16.350000000000023,16.350000000000023 0 0 1 2457.65,383.6 H2357.35 A16.350000000000023,16.350000000000023 0 0 1 2341,367.25 V367.25 A16.350000000000023,16.350000000000023 0 0 1 2357.35,350.9 Z"/></clipPath>
<g clip-path="url(#g17)"><rect x="2342" y="353.9" width="133" height="32.700000000000045" rx="16.350000000000023" fill="#000" opacity="0.5" filter="url(#fShadow)"/></g>
<clipPath id="g18"><rect x="2341" y="350.9" width="133" height="32.700000000000045" rx="16.350000000000023"/></clipPath>
<rect x="2341" y="350.9" width="133" height="32.700000000000045" rx="16.350000000000023" fill="url(#gVar)" fill-opacity="0.88"/>
<linearGradient id="g19" x1="0" y1="0" x2="0" y2="1"><stop offset="0" stop-color="rgba(125,190,220,0.95)"/><stop offset="0.4" stop-color="rgba(45,100,125,0.7)"/><stop offset="1" stop-color="rgba(45,100,125,0.7)" stop-opacity="0.45"/></linearGradient>
<g clip-path="url(#g18)"><rect x="2343" y="351.9" width="129" height="26.16000000000004" fill="url(#g19)" mask="url(#mHoriz)"/>
<rect x="2341" y="377.387" width="133" height="6.213000000000009" fill="#474747" fill-opacity="0.9"/></g>
<rect x="2341" y="350.9" width="133" height="32.700000000000045" rx="16.350000000000023" fill="none" stroke="#121212" stroke-width="1.6"/>
<path d="M2355.715,353.09999999999997 Q2345,355.4 2343.6,364.7975" stroke="#e8e8e8" stroke-width="1.1" fill="none" opacity="0.7"/>
<path d="M2357.35,352.79999999999995 H2457.65" stroke="#fff" stroke-width="0.9" opacity="0.3"/>
<text x="2394.46" y="371.50" font-size="12.50" font-weight="normal" textLength="46.65" lengthAdjust="spacingAndGlyphs" fill="#f0f0f0" >Smart AI</text>
<circle cx="2451.7" cy="367.4" r="5.4" fill="#00a6ef"/>
<path d="M2457.7,364.2 L2461.0,367.4 L2457.7,370.59999999999997 Z" fill="#00a6ef"/>
<clipPath id="g20"><path clip-rule="evenodd" d="M2457,353.6 H2765.8 V446 H2457 Z M2503.2,383.6 H2719.6000000000004 A16.19999999999999,16.19999999999999 0 0 1 2735.8,399.8 V399.8 A16.19999999999999,16.19999999999999 0 0 1 2719.6000000000004,416 H2503.2 A16.19999999999999,16.19999999999999 0 0 1 2487,399.8 V399.8 A16.19999999999999,16.19999999999999 0 0 1 2503.2,383.6 Z"/></clipPath>
<g clip-path="url(#g20)"><rect x="2488" y="386.6" width="248.80000000000018" height="32.39999999999998" rx="16.19999999999999" fill="#000" opacity="0.5" filter="url(#fShadow)"/></g>
<clipPath id="g21"><rect x="2487" y="383.6" width="248.80000000000018" height="32.39999999999998" rx="16.19999999999999"/></clipPath>
<rect x="2487" y="383.6" width="248.80000000000018" height="32.39999999999998" rx="16.19999999999999" fill="url(#gVar)" fill-opacity="0.88"/>
<linearGradient id="g22" x1="0" y1="0" x2="0" y2="1"><stop offset="0" stop-color="rgba(150,200,90,0.9)"/><stop offset="0.4" stop-color="rgba(80,120,40,0.6)"/><stop offset="1" stop-color="rgba(80,120,40,0.6)" stop-opacity="0.45"/></linearGradient>
<g clip-path="url(#g21)"><rect x="2489" y="384.6" width="244.80000000000018" height="25.919999999999984" fill="url(#g22)" mask="url(#mHoriz)"/>
<rect x="2487" y="409.844" width="248.80000000000018" height="6.155999999999996" fill="#474747" fill-opacity="0.9"/></g>
<rect x="2487" y="383.6" width="248.80000000000018" height="32.39999999999998" rx="16.19999999999999" fill="none" stroke="#121212" stroke-width="1.6"/>
<path d="M2501.58,385.8 Q2491,388.1 2489.6,397.37" stroke="#e8e8e8" stroke-width="1.1" fill="none" opacity="0.7"/>
<path d="M2503.2,385.5 H2719.6000000000004" stroke="#fff" stroke-width="0.9" opacity="0.3"/>
<circle cx="2507" cy="399.4" r="5.4" fill="#00a6ef"/>
<path d="M2513,396.2 L2516.3,399.4 L2513,402.59999999999997 Z" fill="#00a6ef"/>
<text x="2521.73" y="403.50" font-size="12.50" font-weight="normal" textLength="34.35" lengthAdjust="spacingAndGlyphs" fill="#f0f0f0" >Target</text>
<text x="2589.39" y="403.50" font-size="12.50" font-weight="normal" textLength="113.14" lengthAdjust="spacingAndGlyphs" fill="#f0f0f0" >Combat Search Time</text>
<circle cx="2713" cy="399.4" r="5.4" fill="#9bee3c"/>
<path d="M2719,396.2 L2722.3,399.4 L2719,402.59999999999997 Z" fill="#9bee3c"/>
<clipPath id="g23"><path clip-rule="evenodd" d="M2457,401.8 H2765.8 V495.3 H2457 Z M2503.75,431.8 H2719.05 A16.75,16.75 0 0 1 2735.8,448.55 V448.55 A16.75,16.75 0 0 1 2719.05,465.3 H2503.75 A16.75,16.75 0 0 1 2487,448.55 V448.55 A16.75,16.75 0 0 1 2503.75,431.8 Z"/></clipPath>
<g clip-path="url(#g23)"><rect x="2488" y="434.8" width="248.80000000000018" height="33.5" rx="16.75" fill="#000" opacity="0.5" filter="url(#fShadow)"/></g>
<clipPath id="g24"><rect x="2487" y="431.8" width="248.80000000000018" height="33.5" rx="16.75"/></clipPath>
<rect x="2487" y="431.8" width="248.80000000000018" height="33.5" rx="16.75" fill="url(#gVar)" fill-opacity="0.88"/>
<linearGradient id="g25" x1="0" y1="0" x2="0" y2="1"><stop offset="0" stop-color="rgba(70,150,140,0.85)"/><stop offset="0.4" stop-color="rgba(20,90,85,0.6)"/><stop offset="1" stop-color="rgba(20,90,85,0.6)" stop-opacity="0.45"/></linearGradient>
<g clip-path="url(#g24)"><rect x="2489" y="432.8" width="244.80000000000018" height="26.8" fill="url(#g25)" mask="url(#mHoriz)"/>
<rect x="2487" y="458.935" width="248.80000000000018" height="6.365" fill="#474747" fill-opacity="0.9"/></g>
<rect x="2487" y="431.8" width="248.80000000000018" height="33.5" rx="16.75" fill="none" stroke="#121212" stroke-width="1.6"/>
<path d="M2502.075,434.0 Q2491,436.3 2489.6,446.0375" stroke="#e8e8e8" stroke-width="1.1" fill="none" opacity="0.7"/>
<path d="M2503.75,433.7 H2719.05" stroke="#fff" stroke-width="0.9" opacity="0.3"/>
<circle cx="2507" cy="447.5" r="5.4" fill="#00a6ef"/>
<path d="M2513,444.3 L2516.3,447.5 L2513,450.7 Z" fill="#00a6ef"/>
<text x="2521.73" y="451.70" font-size="12.50" font-weight="normal" textLength="34.35" lengthAdjust="spacingAndGlyphs" fill="#f0f0f0" >Target</text>
<text x="2589.98" y="451.70" font-size="12.50" font-weight="normal" textLength="112.22" lengthAdjust="spacingAndGlyphs" fill="#f0f0f0" >AI Current Behaviour</text>
<circle cx="2713" cy="447.5" r="5.4" fill="#0a6f66"/>
<path d="M2719,444.3 L2722.3,447.5 L2719,450.7 Z" fill="#0a6f66"/>
<radialGradient id="gBall" cx="0.4" cy="0.35" r="0.7"><stop offset="0" stop-color="#ffffff"/><stop offset="0.6" stop-color="#e8eaf0"/><stop offset="1" stop-color="#9a9cb0"/></radialGradient><circle cx="2736" cy="426.5" r="5.3" fill="url(#gBall)"/><circle cx="2741.5" cy="431.5" r="5.3" fill="url(#gBall)"/>
<clipPath id="g26"><path clip-rule="evenodd" d="M3300.7,223.8 H3629.2 V366.8 H3300.7 Z M3338.7,253.8 H3591.2 A8,8 0 0 1 3599.2,261.8 V328.8 A8,8 0 0 1 3591.2,336.8 H3338.7 A8,8 0 0 1 3330.7,328.8 V261.8 A8,8 0 0 1 3338.7,253.8 Z"/></clipPath>
<g clip-path="url(#g26)"><rect x="3331.7" y="256.8" width="268.5" height="83.0" rx="8" fill="#000" opacity="0.5" filter="url(#fShadow)"/></g>
<rect x="3330.7" y="253.8" width="268.5" height="83.0" rx="8" fill="rgb(19,21,19)" fill-opacity="0.86" stroke="#0c0c0c" stroke-width="1.3"/>
<path d="M3339.7,255.8 H3590.2 A7,7 0 0 1 3597.2,262.8 V276.8 H3332.7 V262.8 A7,7 0 0 1 3339.7,255.8 Z" fill="url(#gFunc)"/>
<path d="M3339.7,255.8 H3590.2 A7,7 0 0 1 3597.2,262.8 V276.8 H3332.7 V262.8 A7,7 0 0 1 3339.7,255.8 Z" fill="url(#gFuncH)"/>
<g transform="translate(3343.5,258.3) scale(0.9117647058823529)"><path d="M13,2.2 Q11.5,0 9.6,0.8 Q8,1.6 7.3,5 L5.2,13.5 Q4.4,16.8 1.6,16.6 Q0.4,16.5 0.2,15.6" stroke="#70c4f4" stroke-width="2.3" fill="none" stroke-linecap="round"/><path d="M4.2,6.6 H10.6" stroke="#70c4f4" stroke-width="1.5"/></g>
<text x="3359.71" y="270.50" font-size="13.66" font-weight="bold" textLength="209.70" lengthAdjust="spacingAndGlyphs" fill="#f0f0f0" filter="url(#fNodeTxt)">Clear and Invalidate Timer by Handle</text>
<path d="M3343.3,288 L3348.3,288 L3354.3,295 L3348.3,302 L3343.3,302 Q3342.3,302 3342.3,301 L3342.3,289 Q3342.3,288 3343.3,288 Z" fill="#f2f2f2"/>
<path d="M3577.2,289 L3582,289 L3587,295 L3582,301 L3577.2,301 Z" fill="none" stroke="#f0f0f0" stroke-width="1.6" stroke-linejoin="round"/>
<path d="M3347.7,317.0 L3352.2999999999997,321.6 L3347.7,326.20000000000005 L3343.1,321.6 Z" fill="#0b55d6"/>
<text x="3356.98" y="326.00" font-size="13.37" font-weight="normal" textLength="39.58" lengthAdjust="spacingAndGlyphs" fill="#f0f0f0" >Handle</text>
<clipPath id="g27"><path clip-rule="evenodd" d="M3138.6,304.7 H3330 V397.2 H3138.6 Z M3184.85,334.7 H3283.75 A16.25,16.25 0 0 1 3300,350.95 V350.95 A16.25,16.25 0 0 1 3283.75,367.2 H3184.85 A16.25,16.25 0 0 1 3168.6,350.95 V350.95 A16.25,16.25 0 0 1 3184.85,334.7 Z"/></clipPath>
<g clip-path="url(#g27)"><rect x="3169.6" y="337.7" width="131.4000000000001" height="32.5" rx="16.25" fill="#000" opacity="0.5" filter="url(#fShadow)"/></g>
<clipPath id="g28"><rect x="3168.6" y="334.7" width="131.4000000000001" height="32.5" rx="16.25"/></clipPath>
<rect x="3168.6" y="334.7" width="131.4000000000001" height="32.5" rx="16.25" fill="url(#gVar)" fill-opacity="0.88"/>
<linearGradient id="g29" x1="0" y1="0" x2="0" y2="1"><stop offset="0" stop-color="rgba(105,145,220,0.9)"/><stop offset="0.4" stop-color="rgba(40,72,140,0.65)"/><stop offset="1" stop-color="rgba(40,72,140,0.65)" stop-opacity="0.45"/></linearGradient>
<g clip-path="url(#g28)"><rect x="3170.6" y="335.7" width="127.40000000000009" height="26.0" fill="url(#g29)" mask="url(#mHoriz)"/>
<rect x="3168.6" y="361.025" width="131.4000000000001" height="6.175" fill="#474747" fill-opacity="0.9"/></g>
<rect x="3168.6" y="334.7" width="131.4000000000001" height="32.5" rx="16.25" fill="none" stroke="#121212" stroke-width="1.6"/>
<path d="M3183.225,336.9 Q3172.6,339.2 3171.2,348.5125" stroke="#e8e8e8" stroke-width="1.1" fill="none" opacity="0.7"/>
<path d="M3184.85,336.59999999999997 H3283.75" stroke="#fff" stroke-width="0.9" opacity="0.3"/>
<text x="3196.47" y="355.50" font-size="12.50" font-weight="normal" textLength="69.72" lengthAdjust="spacingAndGlyphs" fill="#f0f0f0" >Search Timer</text>
<circle cx="3277.6" cy="351.4" r="5.4" fill="#0b55d6"/>
<path d="M3283.6,348.2 L3286.9,351.4 L3283.6,354.59999999999997 Z" fill="#0b55d6"/>
<clipPath id="g30"><path clip-rule="evenodd" d="M659.5,644.5 H993.6 V808.3 H659.5 Z M697.5,674.5 H955.6 A8,8 0 0 1 963.6,682.5 V770.3 A8,8 0 0 1 955.6,778.3 H697.5 A8,8 0 0 1 689.5,770.3 V682.5 A8,8 0 0 1 697.5,674.5 Z"/></clipPath>
<g clip-path="url(#g30)"><rect x="690.5" y="677.5" width="274.1" height="103.79999999999995" rx="8" fill="#000" opacity="0.5" filter="url(#fShadow)"/></g>
<rect x="689.5" y="674.5" width="274.1" height="103.79999999999995" rx="8" fill="rgb(19,21,19)" fill-opacity="0.86" stroke="#0c0c0c" stroke-width="1.3"/>
<path d="M698.5,676.5 H954.6 A7,7 0 0 1 961.6,683.5 V715 H691.5 V683.5 A7,7 0 0 1 698.5,676.5 Z" fill="url(#gFunc)"/>
<path d="M698.5,676.5 H954.6 A7,7 0 0 1 961.6,683.5 V715 H691.5 V683.5 A7,7 0 0 1 698.5,676.5 Z" fill="url(#gFuncH)"/>
<g transform="translate(702,678.9) scale(1.0)"><path d="M13,2.2 Q11.5,0 9.6,0.8 Q8,1.6 7.3,5 L5.2,13.5 Q4.4,16.8 1.6,16.6 Q0.4,16.5 0.2,15.6" stroke="#70c4f4" stroke-width="2.3" fill="none" stroke-linecap="round"/><path d="M4.2,6.6 H10.6" stroke="#70c4f4" stroke-width="1.5"/></g>
<text x="718.80" y="690.60" font-size="12.65" font-weight="bold" textLength="126.35" lengthAdjust="spacingAndGlyphs" fill="#f0f0f0" filter="url(#fNodeTxt)">Closest Attack Target</text>
<text x="718.41" y="707.70" font-size="12.65" font-weight="normal" font-style="italic" textLength="199.14" lengthAdjust="spacingAndGlyphs" fill="#a8ae92" >Target is BTS Range Attack Location</text>
<path d="M701.8,725 L706.8,725 L712.8,732 L706.8,739 L701.8,739 Q700.8,739 700.8,738 L700.8,726 Q700.8,725 701.8,725 Z" fill="#f2f2f2"/>
<path d="M940,725 L945,725 L951,732 L945,739 L940,739 Q939,739 939,738 L939,726 Q939,725 940,725 Z" fill="#f2f2f2"/>
<circle cx="707.1" cy="761.1" r="4.4" fill="#111" stroke="#00a6ef" stroke-width="2"/>
<path d="M713.1,757.9 L716.4,761.1 L713.1,764.3000000000001 Z" fill="#00a6ef"/>
<text x="721.33" y="763.20" font-size="13.37" font-weight="normal" textLength="34.46" lengthAdjust="spacingAndGlyphs" fill="#f0f0f0" >Target</text>
<rect x="761.2" y="752.2" width="29.7" height="17.4" rx="1.5" fill="none" stroke="#bbb" stroke-width="1.3"/>
<text x="765.12" y="766.50" font-size="12.35" font-weight="normal" textLength="21.36" lengthAdjust="spacingAndGlyphs" fill="#d0d0d0" >self</text>
<text x="814.38" y="763.20" font-size="13.37" font-weight="normal" textLength="116.71" lengthAdjust="spacingAndGlyphs" fill="#f0f0f0" >Closest Attack Target</text>
<circle cx="942.1" cy="759" r="5.4" fill="#00a6ef"/>
<path d="M948.1,755.8 L951.4,759 L948.1,762.2 Z" fill="#00a6ef"/>
<clipPath id="g31"><path clip-rule="evenodd" d="M983.9,661.8 H1260.2 V807.2 H983.9 Z M1021.9,691.8 H1222.2 A8,8 0 0 1 1230.2,699.8 V769.2 A8,8 0 0 1 1222.2,777.2 H1021.9 A8,8 0 0 1 1013.9,769.2 V699.8 A8,8 0 0 1 1021.9,691.8 Z"/></clipPath>
<g clip-path="url(#g31)"><rect x="1014.9" y="694.8" width="216.30000000000007" height="85.40000000000009" rx="8" fill="#000" opacity="0.5" filter="url(#fShadow)"/></g>
<rect x="1013.9" y="691.8" width="216.30000000000007" height="85.40000000000009" rx="8" fill="rgb(19,21,19)" fill-opacity="0.86" stroke="#0c0c0c" stroke-width="1.3"/>
<linearGradient id="g32" gradientUnits="userSpaceOnUse" x1="1013.9" y1="691.8" x2="1163.9" y2="727"><stop offset="0" stop-color="#a8a8a8"/><stop offset="0.45" stop-color="#8c8c8c"/><stop offset="0.62" stop-color="#505050"/><stop offset="0.75" stop-color="#303030"/><stop offset="1" stop-color="#2b2b2b"/></linearGradient>
<path d="M1022.9,693.8 H1221.2 A7,7 0 0 1 1228.2,700.8 V715 H1015.9 V700.8 A7,7 0 0 1 1022.9,693.8 Z" fill="url(#g32)"/>
<path d="M1022.9,693.8 H1221.2 A7,7 0 0 1 1228.2,700.8 V715 H1015.9 V700.8 A7,7 0 0 1 1022.9,693.8 Z" fill="url(#gTopHi)"/>
<path d="M1022.9,695.0 H1221.2" stroke="#fff" stroke-width="1.2" opacity="0.3"/>
<text x="1026.19" y="708.50" font-size="15.99" font-weight="bold" textLength="10.84" lengthAdjust="spacingAndGlyphs" fill="#f0f0f0" filter="url(#fNodeTxt)">?</text>
<text x="1042.36" y="708.30" font-size="13.37" font-weight="bold" textLength="40.47" lengthAdjust="spacingAndGlyphs" fill="#f0f0f0" filter="url(#fNodeTxt)">IsValid</text>
<path d="M1026,724.7 L1031,724.7 L1037,731.7 L1031,738.7 L1026,738.7 Q1025,738.7 1025,737.7 L1025,725.7 Q1025,724.7 1026,724.7 Z" fill="#f2f2f2"/>
<path d="M1208.3,724.7 L1213.3,724.7 L1219.3,731.7 L1213.3,738.7 L1208.3,738.7 Q1207.3,738.7 1207.3,737.7 L1207.3,725.7 Q1207.3,724.7 1208.3,724.7 Z" fill="#f2f2f2"/>
<path d="M1208.3,753 L1213.3,753 L1219.3,760 L1213.3,767 L1208.3,767 Q1207.3,767 1207.3,766 L1207.3,754 Q1207.3,753 1208.3,753 Z" fill="#f2f2f2"/>
<text x="1041.34" y="736.00" font-size="13.37" font-weight="normal" textLength="25.97" lengthAdjust="spacingAndGlyphs" fill="#f0f0f0" >Exec</text>
<text x="1160.85" y="736.00" font-size="13.37" font-weight="normal" textLength="40.96" lengthAdjust="spacingAndGlyphs" fill="#f0f0f0" >Is Valid</text>
<circle cx="1030" cy="759" r="5.4" fill="#00a6ef"/>
<path d="M1036,755.8 L1039.3,759 L1036,762.2 Z" fill="#00a6ef"/>
<text x="1043.87" y="763.30" font-size="13.37" font-weight="normal" textLength="66.22" lengthAdjust="spacingAndGlyphs" fill="#f0f0f0" >Input Object</text>
<text x="1138.86" y="764.00" font-size="13.37" font-weight="normal" textLength="62.93" lengthAdjust="spacingAndGlyphs" fill="#f0f0f0" >Is Not Valid</text>
<rect x="1367" y="850.7" width="222" height="90.5" rx="11" fill="none" stroke="url(#gOrange)" stroke-width="3.8"/>
<clipPath id="g33"><path clip-rule="evenodd" d="M1340,824 H1616 V968 H1340 Z M1378,854 H1578 A8,8 0 0 1 1586,862 V930 A8,8 0 0 1 1578,938 H1378 A8,8 0 0 1 1370,930 V862 A8,8 0 0 1 1378,854 Z"/></clipPath>
<g clip-path="url(#g33)"><rect x="1371" y="857" width="216" height="84" rx="8" fill="#000" opacity="0.5" filter="url(#fShadow)"/></g>
<rect x="1370" y="854" width="216" height="84" rx="8" fill="rgb(19,21,19)" fill-opacity="0.86" stroke="#0c0c0c" stroke-width="1.3"/>
<linearGradient id="g34" gradientUnits="userSpaceOnUse" x1="1370" y1="854" x2="1520" y2="888.7"><stop offset="0" stop-color="#a8a8a8"/><stop offset="0.45" stop-color="#8c8c8c"/><stop offset="0.62" stop-color="#505050"/><stop offset="0.75" stop-color="#303030"/><stop offset="1" stop-color="#2b2b2b"/></linearGradient>
<path d="M1379,856 H1577 A7,7 0 0 1 1584,863 V876.7 H1372 V863 A7,7 0 0 1 1379,856 Z" fill="url(#g34)"/>
<path d="M1379,856 H1577 A7,7 0 0 1 1584,863 V876.7 H1372 V863 A7,7 0 0 1 1379,856 Z" fill="url(#gTopHi)"/>
<path d="M1379,857.2 H1577" stroke="#fff" stroke-width="1.2" opacity="0.3"/>
<text x="1383.19" y="870.50" font-size="15.99" font-weight="bold" textLength="10.84" lengthAdjust="spacingAndGlyphs" fill="#f0f0f0" filter="url(#fNodeTxt)">?</text>
<text x="1399.17" y="870.30" font-size="13.37" font-weight="bold" textLength="40.15" lengthAdjust="spacingAndGlyphs" fill="#f0f0f0" filter="url(#fNodeTxt)">IsValid</text>
<path d="M1383,886.9 L1388,886.9 L1394,893.9 L1388,900.9 L1383,900.9 Q1382,900.9 1382,899.9 L1382,887.9 Q1382,886.9 1383,886.9 Z" fill="#f2f2f2"/>
<path d="M1564.4,886.9 L1569.4,886.9 L1575.4,893.9 L1569.4,900.9 L1564.4,900.9 Q1563.4,900.9 1563.4,899.9 L1563.4,887.9 Q1563.4,886.9 1564.4,886.9 Z" fill="#f2f2f2"/>
<path d="M1564.4,915 L1569.4,915 L1575.4,922 L1569.4,929 L1564.4,929 Q1563.4,929 1563.4,928 L1563.4,916 Q1563.4,915 1564.4,915 Z" fill="#f2f2f2"/>
<text x="1398.45" y="898.00" font-size="13.37" font-weight="normal" textLength="25.86" lengthAdjust="spacingAndGlyphs" fill="#f0f0f0" >Exec</text>
<text x="1516.85" y="898.00" font-size="13.37" font-weight="normal" textLength="40.96" lengthAdjust="spacingAndGlyphs" fill="#f0f0f0" >Is Valid</text>
<circle cx="1387.5" cy="921.4" r="5.4" fill="#00a6ef"/>
<path d="M1393.5,918.1999999999999 L1396.8,921.4 L1393.5,924.6 Z" fill="#00a6ef"/>
<text x="1401.27" y="925.50" font-size="13.37" font-weight="normal" textLength="65.82" lengthAdjust="spacingAndGlyphs" fill="#f0f0f0" >Input Object</text>
<text x="1494.86" y="926.30" font-size="13.37" font-weight="normal" textLength="62.93" lengthAdjust="spacingAndGlyphs" fill="#f0f0f0" >Is Not Valid</text>
<rect x="996.4" y="932" width="134.10000000000002" height="37" rx="18.5" fill="none" stroke="url(#gOrange)" stroke-width="3.8"/>
<rect x="1141.7" y="932" width="212.0" height="37" rx="18.5" fill="none" stroke="url(#gOrange)" stroke-width="3.8"/>
<clipPath id="g35"><path clip-rule="evenodd" d="M969,904.5 H1158 V996.5 H969 Z M1015.0,934.5 H1112.0 A16.0,16.0 0 0 1 1128,950.5 V950.5 A16.0,16.0 0 0 1 1112.0,966.5 H1015.0 A16.0,16.0 0 0 1 999,950.5 V950.5 A16.0,16.0 0 0 1 1015.0,934.5 Z"/></clipPath>
<g clip-path="url(#g35)"><rect x="1000" y="937.5" width="129" height="32.0" rx="16.0" fill="#000" opacity="0.5" filter="url(#fShadow)"/></g>
<clipPath id="g36"><rect x="999" y="934.5" width="129" height="32.0" rx="16.0"/></clipPath>
<rect x="999" y="934.5" width="129" height="32.0" rx="16.0" fill="url(#gVar)" fill-opacity="0.88"/>
<linearGradient id="g37" x1="0" y1="0" x2="0" y2="1"><stop offset="0" stop-color="rgba(125,190,220,0.95)"/><stop offset="0.4" stop-color="rgba(45,100,125,0.7)"/><stop offset="1" stop-color="rgba(45,100,125,0.7)" stop-opacity="0.45"/></linearGradient>
<g clip-path="url(#g36)"><rect x="1001" y="935.5" width="125" height="25.6" fill="url(#g37)" mask="url(#mHoriz)"/>
<rect x="999" y="960.42" width="129" height="6.08" fill="#474747" fill-opacity="0.9"/></g>
<rect x="999" y="934.5" width="129" height="32.0" rx="16.0" fill="none" stroke="#121212" stroke-width="1.6"/>
<path d="M1013.4,936.7 Q1003,939.0 1001.6,948.1" stroke="#e8e8e8" stroke-width="1.1" fill="none" opacity="0.7"/>
<path d="M1015.0,936.4 H1112.0" stroke="#fff" stroke-width="0.9" opacity="0.3"/>
<text x="1049.44" y="955.00" font-size="12.50" font-weight="normal" textLength="47.69" lengthAdjust="spacingAndGlyphs" fill="#f0f0f0" >Smart AI</text>
<circle cx="1106.7" cy="950.5" r="5.4" fill="#00a6ef"/>
<path d="M1112.7,947.3 L1116.0,950.5 L1112.7,953.7 Z" fill="#00a6ef"/>
<clipPath id="g38"><path clip-rule="evenodd" d="M1114,904.5 H1381 V996.5 H1114 Z M1160.0,934.5 H1335.0 A16.0,16.0 0 0 1 1351,950.5 V950.5 A16.0,16.0 0 0 1 1335.0,966.5 H1160.0 A16.0,16.0 0 0 1 1144,950.5 V950.5 A16.0,16.0 0 0 1 1160.0,934.5 Z"/></clipPath>
<g clip-path="url(#g38)"><rect x="1145" y="937.5" width="207" height="32.0" rx="16.0" fill="#000" opacity="0.5" filter="url(#fShadow)"/></g>
<clipPath id="g39"><rect x="1144" y="934.5" width="207" height="32.0" rx="16.0"/></clipPath>
<rect x="1144" y="934.5" width="207" height="32.0" rx="16.0" fill="url(#gVar)" fill-opacity="0.88"/>
<linearGradient id="g40" x1="0" y1="0" x2="0" y2="1"><stop offset="0" stop-color="rgba(125,190,220,0.95)"/><stop offset="0.4" stop-color="rgba(45,100,125,0.7)"/><stop offset="1" stop-color="rgba(45,100,125,0.7)" stop-opacity="0.45"/></linearGradient>
<g clip-path="url(#g39)"><rect x="1146" y="935.5" width="203" height="25.6" fill="url(#g40)" mask="url(#mHoriz)"/>
<rect x="1144" y="960.42" width="207" height="6.08" fill="#474747" fill-opacity="0.9"/></g>
<rect x="1144" y="934.5" width="207" height="32.0" rx="16.0" fill="none" stroke="#121212" stroke-width="1.6"/>
<path d="M1158.4,936.7 Q1148,939.0 1146.6,948.1" stroke="#e8e8e8" stroke-width="1.1" fill="none" opacity="0.7"/>
<path d="M1160.0,936.4 H1335.0" stroke="#fff" stroke-width="0.9" opacity="0.3"/>
<circle cx="1162.6" cy="950.5" r="5.4" fill="#00a6ef"/>
<path d="M1168.6,947.3 L1171.8999999999999,950.5 L1168.6,953.7 Z" fill="#00a6ef"/>
<text x="1177.24" y="955.00" font-size="12.50" font-weight="normal" textLength="33.85" lengthAdjust="spacingAndGlyphs" fill="#f0f0f0" >Target</text>
<text x="1244.98" y="955.00" font-size="12.50" font-weight="normal" textLength="73.11" lengthAdjust="spacingAndGlyphs" fill="#f0f0f0" >Attack Target</text>
<circle cx="1329.8" cy="950.5" r="5.4" fill="#00a6ef"/>
<path d="M1335.8,947.3 L1339.1,950.5 L1335.8,953.7 Z" fill="#00a6ef"/>
<clipPath id="g41"><path clip-rule="evenodd" d="M2004.6,644.5 H2301.8 V830.5 H2004.6 Z M2042.6,674.5 H2263.8 A8,8 0 0 1 2271.8,682.5 V792.5 A8,8 0 0 1 2263.8,800.5 H2042.6 A8,8 0 0 1 2034.6,792.5 V682.5 A8,8 0 0 1 2042.6,674.5 Z"/></clipPath>
<g clip-path="url(#g41)"><rect x="2035.6" y="677.5" width="237.20000000000027" height="126.0" rx="8" fill="#000" opacity="0.5" filter="url(#fShadow)"/></g>
<rect x="2034.6" y="674.5" width="237.20000000000027" height="126.0" rx="8" fill="rgb(19,21,19)" fill-opacity="0.86" stroke="#0c0c0c" stroke-width="1.3"/>
<path d="M2043.6,676.5 H2262.8 A7,7 0 0 1 2269.8,683.5 V714.5 H2036.6 V683.5 A7,7 0 0 1 2043.6,676.5 Z" fill="url(#gFunc)"/>
<path d="M2043.6,676.5 H2262.8 A7,7 0 0 1 2269.8,683.5 V714.5 H2036.6 V683.5 A7,7 0 0 1 2043.6,676.5 Z" fill="url(#gFuncH)"/>
<path d="M2051.6,679.5 L2059,687 L2051.6,694.5 L2044.2,687 Z" fill="none" stroke="#f0f0f0" stroke-width="2.2" stroke-linejoin="round"/>
<text x="2063.65" y="690.80" font-size="13.66" font-weight="bold" textLength="121.50" lengthAdjust="spacingAndGlyphs" fill="#f0f0f0" filter="url(#fNodeTxt)">Set BB Attack Target</text>
<text x="2063.42" y="707.70" font-size="12.65" font-weight="normal" font-style="italic" textLength="178.16" lengthAdjust="spacingAndGlyphs" fill="#a8ae92" >Target is BP Smart AIComponent</text>
<path d="M2046.7,724.8 L2051.7,724.8 L2057.7,731.8 L2051.7,738.8 L2046.7,738.8 Q2045.7,738.8 2045.7,737.8 L2045.7,725.8 Q2045.7,724.8 2046.7,724.8 Z" fill="#f2f2f2"/>
<path d="M2249,724.8 L2254,724.8 L2260,731.8 L2254,738.8 L2249,738.8 Q2248,738.8 2248,737.8 L2248,725.8 Q2248,724.8 2249,724.8 Z" fill="#f2f2f2"/>
<circle cx="2051.6" cy="758.6" r="5.4" fill="#00a6ef"/>
<path d="M2057.6,755.4 L2060.9,758.6 L2057.6,761.8000000000001 Z" fill="#00a6ef"/>
<text x="2066.04" y="762.80" font-size="13.37" font-weight="normal" textLength="34.05" lengthAdjust="spacingAndGlyphs" fill="#f0f0f0" >Target</text>
<circle cx="2051.6" cy="785.1" r="5.4" fill="#00a6ef"/>
<path d="M2057.6,781.9 L2060.9,785.1 L2057.6,788.3000000000001 Z" fill="#00a6ef"/>
<text x="2066.28" y="789.30" font-size="13.37" font-weight="normal" textLength="43.92" lengthAdjust="spacingAndGlyphs" fill="#f0f0f0" >Attacker</text>
<clipPath id="g42"><path clip-rule="evenodd" d="M1809.6,774.8 H2002.4 V867.5 H1809.6 Z M1855.9499999999998,804.8 H1956.0500000000002 A16.350000000000023,16.350000000000023 0 0 1 1972.4,821.15 V821.15 A16.350000000000023,16.350000000000023 0 0 1 1956.0500000000002,837.5 H1855.9499999999998 A16.350000000000023,16.350000000000023 0 0 1 1839.6,821.15 V821.15 A16.350000000000023,16.350000000000023 0 0 1 1855.9499999999998,804.8 Z"/></clipPath>
<g clip-path="url(#g42)"><rect x="1840.6" y="807.8" width="132.80000000000018" height="32.700000000000045" rx="16.350000000000023" fill="#000" opacity="0.5" filter="url(#fShadow)"/></g>
<clipPath id="g43"><rect x="1839.6" y="804.8" width="132.80000000000018" height="32.700000000000045" rx="16.350000000000023"/></clipPath>
<rect x="1839.6" y="804.8" width="132.80000000000018" height="32.700000000000045" rx="16.350000000000023" fill="url(#gVar)" fill-opacity="0.88"/>
<linearGradient id="g44" x1="0" y1="0" x2="0" y2="1"><stop offset="0" stop-color="rgba(125,190,220,0.95)"/><stop offset="0.4" stop-color="rgba(45,100,125,0.7)"/><stop offset="1" stop-color="rgba(45,100,125,0.7)" stop-opacity="0.45"/></linearGradient>
<g clip-path="url(#g43)"><rect x="1841.6" y="805.8" width="128.80000000000018" height="26.16000000000004" fill="url(#g44)" mask="url(#mHoriz)"/>
<rect x="1839.6" y="831.287" width="132.80000000000018" height="6.213000000000009" fill="#474747" fill-opacity="0.9"/></g>
<rect x="1839.6" y="804.8" width="132.80000000000018" height="32.700000000000045" rx="16.350000000000023" fill="none" stroke="#121212" stroke-width="1.6"/>
<path d="M1854.3149999999998,807.0 Q1843.6,809.3 1842.1999999999998,818.6975" stroke="#e8e8e8" stroke-width="1.1" fill="none" opacity="0.7"/>
<path d="M1855.9499999999998,806.6999999999999 H1956.0500000000002" stroke="#fff" stroke-width="0.9" opacity="0.3"/>
<text x="1891.44" y="825.30" font-size="12.50" font-weight="normal" textLength="47.69" lengthAdjust="spacingAndGlyphs" fill="#f0f0f0" >Smart AI</text>
<circle cx="1949.2" cy="820.8" r="5.4" fill="#00a6ef"/>
<path d="M1955.2,817.5999999999999 L1958.5,820.8 L1955.2,824.0 Z" fill="#00a6ef"/>
<clipPath id="g45"><path clip-rule="evenodd" d="M2311.2,758.4 H2504.4 V851.1 H2311.2 Z M2357.5499999999997,788.4 H2458.05 A16.350000000000023,16.350000000000023 0 0 1 2474.4,804.75 V804.75 A16.350000000000023,16.350000000000023 0 0 1 2458.05,821.1 H2357.5499999999997 A16.350000000000023,16.350000000000023 0 0 1 2341.2,804.75 V804.75 A16.350000000000023,16.350000000000023 0 0 1 2357.5499999999997,788.4 Z"/></clipPath>
<g clip-path="url(#g45)"><rect x="2342.2" y="791.4" width="133.20000000000027" height="32.700000000000045" rx="16.350000000000023" fill="#000" opacity="0.5" filter="url(#fShadow)"/></g>
<clipPath id="g46"><rect x="2341.2" y="788.4" width="133.20000000000027" height="32.700000000000045" rx="16.350000000000023"/></clipPath>
<rect x="2341.2" y="788.4" width="133.20000000000027" height="32.700000000000045" rx="16.350000000000023" fill="url(#gVar)" fill-opacity="0.88"/>
<linearGradient id="g47" x1="0" y1="0" x2="0" y2="1"><stop offset="0" stop-color="rgba(125,190,220,0.95)"/><stop offset="0.4" stop-color="rgba(45,100,125,0.7)"/><stop offset="1" stop-color="rgba(45,100,125,0.7)" stop-opacity="0.45"/></linearGradient>
<g clip-path="url(#g46)"><rect x="2343.2" y="789.4" width="129.20000000000027" height="26.16000000000004" fill="url(#g47)" mask="url(#mHoriz)"/>
<rect x="2341.2" y="814.8870000000001" width="133.20000000000027" height="6.213000000000009" fill="#474747" fill-opacity="0.9"/></g>
<rect x="2341.2" y="788.4" width="133.20000000000027" height="32.700000000000045" rx="16.350000000000023" fill="none" stroke="#121212" stroke-width="1.6"/>
<path d="M2355.915,790.6 Q2345.2,792.9 2343.7999999999997,802.2975" stroke="#e8e8e8" stroke-width="1.1" fill="none" opacity="0.7"/>
<path d="M2357.5499999999997,790.3 H2458.05" stroke="#fff" stroke-width="0.9" opacity="0.3"/>
<text x="2394.46" y="809.00" font-size="12.50" font-weight="normal" textLength="46.65" lengthAdjust="spacingAndGlyphs" fill="#f0f0f0" >Smart AI</text>
<circle cx="2451.5" cy="804.4" r="5.4" fill="#00a6ef"/>
<path d="M2457.5,801.1999999999999 L2460.8,804.4 L2457.5,807.6 Z" fill="#00a6ef"/>
<clipPath id="g48"><path clip-rule="evenodd" d="M2473.7,644.7 H2771.9 V804.4 H2473.7 Z M2511.7,674.7 H2733.9 A8,8 0 0 1 2741.9,682.7 V766.4 A8,8 0 0 1 2733.9,774.4 H2511.7 A8,8 0 0 1 2503.7,766.4 V682.7 A8,8 0 0 1 2511.7,674.7 Z"/></clipPath>
<g clip-path="url(#g48)"><rect x="2504.7" y="677.7" width="238.20000000000027" height="99.69999999999993" rx="8" fill="#000" opacity="0.5" filter="url(#fShadow)"/></g>
<rect x="2503.7" y="674.7" width="238.20000000000027" height="99.69999999999993" rx="8" fill="rgb(19,21,19)" fill-opacity="0.86" stroke="#0c0c0c" stroke-width="1.3"/>
<path d="M2512.7,676.7 H2732.9 A7,7 0 0 1 2739.9,683.7 V715 H2505.7 V683.7 A7,7 0 0 1 2512.7,676.7 Z" fill="url(#gFunc)"/>
<path d="M2512.7,676.7 H2732.9 A7,7 0 0 1 2739.9,683.7 V715 H2505.7 V683.7 A7,7 0 0 1 2512.7,676.7 Z" fill="url(#gFuncH)"/>
<path d="M2521.5,679.5 L2529,687 L2521.5,694.5 L2514,687 Z" fill="none" stroke="#f0f0f0" stroke-width="2.2" stroke-linejoin="round"/>
<text x="2533.67" y="690.80" font-size="13.66" font-weight="bold" textLength="133.75" lengthAdjust="spacingAndGlyphs" fill="#f0f0f0" filter="url(#fNodeTxt)">Determine Attack Type</text>
<text x="2533.92" y="707.70" font-size="12.65" font-weight="normal" font-style="italic" textLength="177.66" lengthAdjust="spacingAndGlyphs" fill="#a8ae92" >Target is BP Smart AIComponent</text>
<path d="M2516.7,725 L2521.7,725 L2527.7,732 L2521.7,739 L2516.7,739 Q2515.7,739 2515.7,738 L2515.7,726 Q2515.7,725 2516.7,725 Z" fill="#f2f2f2"/>
<path d="M2719,725 L2724,725 L2730,732 L2724,739 L2719,739 Q2718,739 2718,738 L2718,726 Q2718,725 2719,725 Z" fill="#f2f2f2"/>
<circle cx="2521.5" cy="758.7" r="5.4" fill="#00a6ef"/>
<path d="M2527.5,755.5 L2530.8,758.7 L2527.5,761.9000000000001 Z" fill="#00a6ef"/>
<text x="2535.53" y="763.00" font-size="13.37" font-weight="normal" textLength="34.56" lengthAdjust="spacingAndGlyphs" fill="#f0f0f0" >Target</text>
<clipPath id="g49"><path clip-rule="evenodd" d="M2959.6,661.7 H3289.4 V804.4 H2959.6 Z M2997.6,691.7 H3251.4 A8,8 0 0 1 3259.4,699.7 V766.4 A8,8 0 0 1 3251.4,774.4 H2997.6 A8,8 0 0 1 2989.6,766.4 V699.7 A8,8 0 0 1 2997.6,691.7 Z"/></clipPath>
<g clip-path="url(#g49)"><rect x="2990.6" y="694.7" width="269.8000000000002" height="82.69999999999993" rx="8" fill="#000" opacity="0.5" filter="url(#fShadow)"/></g>
<rect x="2989.6" y="691.7" width="269.8000000000002" height="82.69999999999993" rx="8" fill="rgb(19,21,19)" fill-opacity="0.86" stroke="#0c0c0c" stroke-width="1.3"/>
<path d="M2998.6,693.7 H3250.4 A7,7 0 0 1 3257.4,700.7 V715 H2991.6 V700.7 A7,7 0 0 1 2998.6,693.7 Z" fill="url(#gFunc)"/>
<path d="M2998.6,693.7 H3250.4 A7,7 0 0 1 3257.4,700.7 V715 H2991.6 V700.7 A7,7 0 0 1 2998.6,693.7 Z" fill="url(#gFuncH)"/>
<g transform="translate(3003.2,696.9) scale(0.8823529411764706)"><path d="M13,2.2 Q11.5,0 9.6,0.8 Q8,1.6 7.3,5 L5.2,13.5 Q4.4,16.8 1.6,16.6 Q0.4,16.5 0.2,15.6" stroke="#70c4f4" stroke-width="2.3" fill="none" stroke-linecap="round"/><path d="M4.2,6.6 H10.6" stroke="#70c4f4" stroke-width="1.5"/></g>
<text x="3019.81" y="708.50" font-size="13.66" font-weight="bold" textLength="209.60" lengthAdjust="spacingAndGlyphs" fill="#f0f0f0" filter="url(#fNodeTxt)">Clear and Invalidate Timer by Handle</text>
<path d="M3002.5,725 L3007.5,725 L3013.5,732 L3007.5,739 L3002.5,739 Q3001.5,739 3001.5,738 L3001.5,726 Q3001.5,725 3002.5,725 Z" fill="#f2f2f2"/>
<path d="M3236.7,726 L3241.5,726 L3246.5,732 L3241.5,738 L3236.7,738 Z" fill="none" stroke="#f0f0f0" stroke-width="1.6" stroke-linejoin="round"/>
<path d="M3007.7,754.1 L3012.2999999999997,758.7 L3007.7,763.3000000000001 L3003.1,758.7 Z" fill="#0b55d6"/>
<text x="3016.98" y="763.00" font-size="13.37" font-weight="normal" textLength="39.58" lengthAdjust="spacingAndGlyphs" fill="#f0f0f0" >Handle</text>
<clipPath id="g50"><path clip-rule="evenodd" d="M2830.4,742.7 H3022.3 V835.5 H2830.4 Z M2876.8,772.7 H2975.9 A16.399999999999977,16.399999999999977 0 0 1 2992.3,789.1 V789.1 A16.399999999999977,16.399999999999977 0 0 1 2975.9,805.5 H2876.8 A16.399999999999977,16.399999999999977 0 0 1 2860.4,789.1 V789.1 A16.399999999999977,16.399999999999977 0 0 1 2876.8,772.7 Z"/></clipPath>
<g clip-path="url(#g50)"><rect x="2861.4" y="775.7" width="131.9000000000001" height="32.799999999999955" rx="16.399999999999977" fill="#000" opacity="0.5" filter="url(#fShadow)"/></g>
<clipPath id="g51"><rect x="2860.4" y="772.7" width="131.9000000000001" height="32.799999999999955" rx="16.399999999999977"/></clipPath>
<rect x="2860.4" y="772.7" width="131.9000000000001" height="32.799999999999955" rx="16.399999999999977" fill="url(#gVar)" fill-opacity="0.88"/>
<linearGradient id="g52" x1="0" y1="0" x2="0" y2="1"><stop offset="0" stop-color="rgba(105,145,220,0.9)"/><stop offset="0.4" stop-color="rgba(40,72,140,0.65)"/><stop offset="1" stop-color="rgba(40,72,140,0.65)" stop-opacity="0.45"/></linearGradient>
<g clip-path="url(#g51)"><rect x="2862.4" y="773.7" width="127.90000000000009" height="26.239999999999966" fill="url(#g52)" mask="url(#mHoriz)"/>
<rect x="2860.4" y="799.268" width="131.9000000000001" height="6.231999999999991" fill="#474747" fill-opacity="0.9"/></g>
<rect x="2860.4" y="772.7" width="131.9000000000001" height="32.799999999999955" rx="16.399999999999977" fill="none" stroke="#121212" stroke-width="1.6"/>
<path d="M2875.16,774.9000000000001 Q2864.4,777.2 2863.0,786.64" stroke="#e8e8e8" stroke-width="1.1" fill="none" opacity="0.7"/>
<path d="M2876.8,774.6 H2975.9" stroke="#fff" stroke-width="0.9" opacity="0.3"/>
<text x="2888.47" y="792.80" font-size="12.50" font-weight="normal" textLength="69.72" lengthAdjust="spacingAndGlyphs" fill="#f0f0f0" >Search Timer</text>
<circle cx="2969.7" cy="788.4" r="5.4" fill="#0b55d6"/>
<path d="M2975.7,785.1999999999999 L2979.0,788.4 L2975.7,791.6 Z" fill="#0b55d6"/>
<clipPath id="g53"><path clip-rule="evenodd" d="M1972.2,921 H2269.5 V1106 H1972.2 Z M2010.2,951 H2231.5 A8,8 0 0 1 2239.5,959 V1068 A8,8 0 0 1 2231.5,1076 H2010.2 A8,8 0 0 1 2002.2,1068 V959 A8,8 0 0 1 2010.2,951 Z"/></clipPath>
<g clip-path="url(#g53)"><rect x="2003.2" y="954" width="237.29999999999995" height="125" rx="8" fill="#000" opacity="0.5" filter="url(#fShadow)"/></g>
<rect x="2002.2" y="951" width="237.29999999999995" height="125" rx="8" fill="rgb(19,21,19)" fill-opacity="0.86" stroke="#0c0c0c" stroke-width="1.3"/>
<path d="M2011.2,953 H2230.5 A7,7 0 0 1 2237.5,960 V989 H2004.2 V960 A7,7 0 0 1 2011.2,953 Z" fill="url(#gFunc)"/>
<path d="M2011.2,953 H2230.5 A7,7 0 0 1 2237.5,960 V989 H2004.2 V960 A7,7 0 0 1 2011.2,953 Z" fill="url(#gFuncH)"/>
<g transform="translate(2014.5,955.6) scale(0.9411764705882353)"><path d="M13,2.2 Q11.5,0 9.6,0.8 Q8,1.6 7.3,5 L5.2,13.5 Q4.4,16.8 1.6,16.6 Q0.4,16.5 0.2,15.6" stroke="#70c4f4" stroke-width="2.3" fill="none" stroke-linecap="round"/><path d="M4.2,6.6 H10.6" stroke="#70c4f4" stroke-width="1.5"/></g>
<text x="2031.17" y="966.80" font-size="13.66" font-weight="bold" textLength="116.99" lengthAdjust="spacingAndGlyphs" fill="#f0f0f0" filter="url(#fNodeTxt)">Reset Attack Target</text>
<text x="2031.42" y="983.50" font-size="12.65" font-weight="normal" font-style="italic" textLength="178.16" lengthAdjust="spacingAndGlyphs" fill="#a8ae92" >Target is BP Smart AIComponent</text>
<path d="M2013.7,1000 L2018.7,1000 L2024.7,1007 L2018.7,1014 L2013.7,1014 Q2012.7,1014 2012.7,1013 L2012.7,1001 Q2012.7,1000 2013.7,1000 Z" fill="#f2f2f2"/>
<path d="M2216.2,1000 L2221.2,1000 L2227.2,1007 L2221.2,1014 L2216.2,1014 Q2215.2,1014 2215.2,1013 L2215.2,1001 Q2215.2,1000 2216.2,1000 Z" fill="#f2f2f2"/>
<circle cx="2019" cy="1034" r="5.4" fill="#00a6ef"/>
<path d="M2025,1030.8 L2028.3,1034 L2025,1037.2 Z" fill="#00a6ef"/>
<text x="2033.73" y="1038.20" font-size="13.37" font-weight="normal" textLength="34.35" lengthAdjust="spacingAndGlyphs" fill="#f0f0f0" >Target</text>
<text x="2108.01" y="1038.20" font-size="13.37" font-weight="normal" textLength="99.48" lengthAdjust="spacingAndGlyphs" fill="#f0f0f0" >New Attack Target</text>
<circle cx="2219.8" cy="1034" r="4.4" fill="#111" stroke="#8a0a0a" stroke-width="2"/>
<path d="M2225.8,1030.8 L2229.1000000000004,1034 L2225.8,1037.2 Z" fill="#8a0a0a"/>
<text x="2134.98" y="1064.50" font-size="13.37" font-weight="normal" textLength="72.51" lengthAdjust="spacingAndGlyphs" fill="#f0f0f0" >Attack Target</text>
<circle cx="2219.8" cy="1060" r="4.4" fill="#111" stroke="#00a6ef" stroke-width="2"/>
<path d="M2225.8,1056.8 L2229.1000000000004,1060 L2225.8,1063.2 Z" fill="#00a6ef"/>
<clipPath id="g54"><path clip-rule="evenodd" d="M1809.5,1017.2 H2002.4 V1110.2 H1809.5 Z M1856.0,1047.2 H1955.9 A16.5,16.5 0 0 1 1972.4,1063.7 V1063.7 A16.5,16.5 0 0 1 1955.9,1080.2 H1856.0 A16.5,16.5 0 0 1 1839.5,1063.7 V1063.7 A16.5,16.5 0 0 1 1856.0,1047.2 Z"/></clipPath>
<g clip-path="url(#g54)"><rect x="1840.5" y="1050.2" width="132.9000000000001" height="33.0" rx="16.5" fill="#000" opacity="0.5" filter="url(#fShadow)"/></g>
<clipPath id="g55"><rect x="1839.5" y="1047.2" width="132.9000000000001" height="33.0" rx="16.5"/></clipPath>
<rect x="1839.5" y="1047.2" width="132.9000000000001" height="33.0" rx="16.5" fill="url(#gVar)" fill-opacity="0.88"/>
<linearGradient id="g56" x1="0" y1="0" x2="0" y2="1"><stop offset="0" stop-color="rgba(125,190,220,0.95)"/><stop offset="0.4" stop-color="rgba(45,100,125,0.7)"/><stop offset="1" stop-color="rgba(45,100,125,0.7)" stop-opacity="0.45"/></linearGradient>
<g clip-path="url(#g55)"><rect x="1841.5" y="1048.2" width="128.9000000000001" height="26.400000000000002" fill="url(#g56)" mask="url(#mHoriz)"/>
<rect x="1839.5" y="1073.93" width="132.9000000000001" height="6.2700000000000005" fill="#474747" fill-opacity="0.9"/></g>
<rect x="1839.5" y="1047.2" width="132.9000000000001" height="33.0" rx="16.5" fill="none" stroke="#121212" stroke-width="1.6"/>
<path d="M1854.35,1049.4 Q1843.5,1051.7 1842.1,1061.2250000000001" stroke="#e8e8e8" stroke-width="1.1" fill="none" opacity="0.7"/>
<path d="M1856.0,1049.1000000000001 H1955.9" stroke="#fff" stroke-width="0.9" opacity="0.3"/>
<text x="1891.44" y="1067.60" font-size="12.50" font-weight="normal" textLength="47.69" lengthAdjust="spacingAndGlyphs" fill="#f0f0f0" >Smart AI</text>
<circle cx="1950.4" cy="1063.2" r="5.4" fill="#00a6ef"/>
<path d="M1956.4,1060.0 L1959.7,1063.2 L1956.4,1066.4 Z" fill="#00a6ef"/>
<clipPath id="g57"><path clip-rule="evenodd" d="M2587.4,937 H2917.6 V1080.4 H2587.4 Z M2625.4,967 H2879.6 A8,8 0 0 1 2887.6,975 V1042.4 A8,8 0 0 1 2879.6,1050.4 H2625.4 A8,8 0 0 1 2617.4,1042.4 V975 A8,8 0 0 1 2625.4,967 Z"/></clipPath>
<g clip-path="url(#g57)"><rect x="2618.4" y="970" width="270.1999999999998" height="83.40000000000009" rx="8" fill="#000" opacity="0.5" filter="url(#fShadow)"/></g>
<rect x="2617.4" y="967" width="270.1999999999998" height="83.40000000000009" rx="8" fill="rgb(19,21,19)" fill-opacity="0.86" stroke="#0c0c0c" stroke-width="1.3"/>
<path d="M2626.4,969 H2878.6 A7,7 0 0 1 2885.6,976 V989 H2619.4 V976 A7,7 0 0 1 2626.4,969 Z" fill="url(#gFunc)"/>
<path d="M2626.4,969 H2878.6 A7,7 0 0 1 2885.6,976 V989 H2619.4 V976 A7,7 0 0 1 2626.4,969 Z" fill="url(#gFuncH)"/>
<g transform="translate(2629.7,970.7) scale(0.9411764705882353)"><path d="M13,2.2 Q11.5,0 9.6,0.8 Q8,1.6 7.3,5 L5.2,13.5 Q4.4,16.8 1.6,16.6 Q0.4,16.5 0.2,15.6" stroke="#70c4f4" stroke-width="2.3" fill="none" stroke-linecap="round"/><path d="M4.2,6.6 H10.6" stroke="#70c4f4" stroke-width="1.5"/></g>
<text x="2646.21" y="982.80" font-size="13.66" font-weight="bold" textLength="210.20" lengthAdjust="spacingAndGlyphs" fill="#f0f0f0" filter="url(#fNodeTxt)">Clear and Invalidate Timer by Handle</text>
<path d="M2629.4,1000.3 L2634.4,1000.3 L2640.4,1007.3 L2634.4,1014.3 L2629.4,1014.3 Q2628.4,1014.3 2628.4,1013.3 L2628.4,1001.3 Q2628.4,1000.3 2629.4,1000.3 Z" fill="#f2f2f2"/>
<path d="M2863.2,1001.3 L2868,1001.3 L2873,1007.3 L2868,1013.3 L2863.2,1013.3 Z" fill="none" stroke="#f0f0f0" stroke-width="1.6" stroke-linejoin="round"/>
<path d="M2634.3,1029.8000000000002 L2638.9,1034.4 L2634.3,1039.0 L2629.7000000000003,1034.4 Z" fill="#0b55d6"/>
<text x="2643.98" y="1038.60" font-size="13.37" font-weight="normal" textLength="39.58" lengthAdjust="spacingAndGlyphs" fill="#f0f0f0" >Handle</text>
<clipPath id="g58"><path clip-rule="evenodd" d="M2425.7,1017.2 H2617.2 V1110.2 H2425.7 Z M2472.2,1047.2 H2570.7 A16.5,16.5 0 0 1 2587.2,1063.7 V1063.7 A16.5,16.5 0 0 1 2570.7,1080.2 H2472.2 A16.5,16.5 0 0 1 2455.7,1063.7 V1063.7 A16.5,16.5 0 0 1 2472.2,1047.2 Z"/></clipPath>
<g clip-path="url(#g58)"><rect x="2456.7" y="1050.2" width="131.5" height="33.0" rx="16.5" fill="#000" opacity="0.5" filter="url(#fShadow)"/></g>
<clipPath id="g59"><rect x="2455.7" y="1047.2" width="131.5" height="33.0" rx="16.5"/></clipPath>
<rect x="2455.7" y="1047.2" width="131.5" height="33.0" rx="16.5" fill="url(#gVar)" fill-opacity="0.88"/>
<linearGradient id="g60" x1="0" y1="0" x2="0" y2="1"><stop offset="0" stop-color="rgba(105,145,220,0.9)"/><stop offset="0.4" stop-color="rgba(40,72,140,0.65)"/><stop offset="1" stop-color="rgba(40,72,140,0.65)" stop-opacity="0.45"/></linearGradient>
<g clip-path="url(#g59)"><rect x="2457.7" y="1048.2" width="127.5" height="26.400000000000002" fill="url(#g60)" mask="url(#mHoriz)"/>
<rect x="2455.7" y="1073.93" width="131.5" height="6.2700000000000005" fill="#474747" fill-opacity="0.9"/></g>
<rect x="2455.7" y="1047.2" width="131.5" height="33.0" rx="16.5" fill="none" stroke="#121212" stroke-width="1.6"/>
<path d="M2470.5499999999997,1049.4 Q2459.7,1051.7 2458.2999999999997,1061.2250000000001" stroke="#e8e8e8" stroke-width="1.1" fill="none" opacity="0.7"/>
<path d="M2472.2,1049.1000000000001 H2570.7" stroke="#fff" stroke-width="0.9" opacity="0.3"/>
<text x="2483.47" y="1067.60" font-size="12.50" font-weight="normal" textLength="69.72" lengthAdjust="spacingAndGlyphs" fill="#f0f0f0" >Search Timer</text>
<circle cx="2564.7" cy="1063.7" r="5.4" fill="#0b55d6"/>
<path d="M2570.7,1060.5 L2574.0,1063.7 L2570.7,1066.9 Z" fill="#0b55d6"/>
<clipPath id="cVN"><rect x="9.2" y="399.2" width="145.60000000000002" height="58.69999999999999" rx="14"/><rect x="187.3" y="399.2" width="135.5" height="36.30000000000001" rx="14"/><rect x="1986" y="269.8" width="233" height="100.19999999999999" rx="14"/><rect x="1823.1" y="350.2" width="133.30000000000018" height="34.19999999999999" rx="17.099999999999994"/><rect x="2341" y="350.9" width="133" height="32.700000000000045" rx="16.350000000000023"/><rect x="2487" y="383.6" width="248.80000000000018" height="32.39999999999998" rx="16.19999999999999"/><rect x="2487" y="431.8" width="248.80000000000018" height="33.5" rx="16.75"/><rect x="3168.6" y="334.7" width="131.4000000000001" height="32.5" rx="16.25"/><rect x="999" y="934.5" width="129" height="32.0" rx="16.0"/><rect x="1144" y="934.5" width="207" height="32.0" rx="16.0"/><rect x="1839.6" y="804.8" width="132.80000000000018" height="32.700000000000045" rx="16.350000000000023"/><rect x="2341.2" y="788.4" width="133.20000000000027" height="32.700000000000045" rx="16.350000000000023"/><rect x="2860.4" y="772.7" width="131.9000000000001" height="32.799999999999955" rx="16.399999999999977"/><rect x="1839.5" y="1047.2" width="132.9000000000001" height="33.0" rx="16.5"/><rect x="2455.7" y="1047.2" width="131.5" height="33.0" rx="16.5"/></clipPath><g clip-path="url(#cVN)" opacity="0.9">
<path d="M-5.0,416.3 C6.4,416.3 14.9,413.4 26.3,413.4" stroke="#7fd43a" stroke-width="1.6" fill="none"/>
<path d="M133.6,428.4 C160.6,428.4 177.3,418.0 204.3,418.0" stroke="#9a0606" stroke-width="1.6" fill="none"/>
<path d="M303.0,418.0 C356.0,418.0 313.0,322.0 366.0,322.0" stroke="#9a0606" stroke-width="1.6" fill="none"/>
<path d="M942.1,759.0 C971.4,759.0 1000.7,759.0 1030.0,759.0" stroke="#0aa0e6" stroke-width="1.6" fill="none"/>
<path d="M942.1,759.0 C1284.1,759.0 1709.6,785.1 2051.6,785.1" stroke="#0aa0e6" stroke-width="1.6" fill="none"/>
<path d="M1932.4,367.5 C1960.8,367.5 1976.1,354.4 2004.5,354.4" stroke="#0aa0e6" stroke-width="1.6" fill="none"/>
<path d="M2451.7,367.4 C2581.7,367.4 2666.0,321.7 2796.0,321.7" stroke="#0aa0e6" stroke-width="1.6" fill="none"/>
<path d="M2451.7,367.4 C2480.8,367.4 2477.9,399.4 2507.0,399.4" stroke="#0aa0e6" stroke-width="1.6" fill="none"/>
<path d="M2451.7,367.4 C2496.8,367.4 2461.9,447.5 2507.0,447.5" stroke="#0aa0e6" stroke-width="1.6" fill="none"/>
<path d="M2713.0,399.4 C2741.6,399.4 2767.4,396.6 2796.0,396.6" stroke="#9bee3c" stroke-width="1.6" fill="none"/>
<path d="M2713.0,447.5 C2748.9,447.5 2760.1,422.7 2796.0,422.7" stroke="#0a6f66" stroke-width="1.6" fill="none"/>
<path d="M3277.6,351.4 C3310.9,351.4 3314.4,321.6 3347.7,321.6" stroke="#0b55d6" stroke-width="1.6" fill="none"/>
<path d="M1949.2,820.8 C2004.1,820.8 1996.7,758.6 2051.6,758.6" stroke="#0aa0e6" stroke-width="1.6" fill="none"/>
<path d="M2451.5,804.4 C2490.1,804.4 2482.9,758.7 2521.5,758.7" stroke="#0aa0e6" stroke-width="1.6" fill="none"/>
<path d="M2969.7,788.4 C2992.3,788.4 2985.1,758.7 3007.7,758.7" stroke="#0b55d6" stroke-width="1.6" fill="none"/>
<path d="M1950.4,1063.2 C1983.0,1063.2 1986.4,1034.0 2019.0,1034.0" stroke="#0aa0e6" stroke-width="1.6" fill="none"/>
<path d="M2564.7,1063.7 C2597.7,1063.7 2601.3,1034.4 2634.3,1034.4" stroke="#0b55d6" stroke-width="1.6" fill="none"/>
<path d="M1106.7,950.5 C1125.3,950.5 1144.0,950.5 1162.6,950.5" stroke="#0aa0e6" stroke-width="1.6" fill="none"/>
<path d="M1329.8,950.5 C1358.7,950.5 1358.6,921.4 1387.5,921.4" stroke="#0aa0e6" stroke-width="1.6" fill="none"/>
</g>
<linearGradient id="g61" x1="0" y1="0" x2="0" y2="1"><stop offset="0" stop-color="#fff" stop-opacity="0.95"/><stop offset="1" stop-color="#fff" stop-opacity="0"/></linearGradient>
<path d="M1785.5,209.2 L1798.5,209.2 Q1793.5,212.2 1792,219.7 Q1790.5,212.2 1785.5,209.2 Z" fill="url(#g61)"/>
<rect x="1774.3" y="168.5" width="377.4" height="40.4" rx="5" fill="url(#gBubble)" stroke="#fafafa" stroke-width="2.2"/>
<text x="1787.38" y="194.70" font-size="19.33" font-weight="normal" textLength="350.77" lengthAdjust="spacingAndGlyphs" fill="#4c4c4c" >Set the AI is searching for attack target</text>
<linearGradient id="g62" x1="0" y1="0" x2="0" y2="1"><stop offset="0" stop-color="#fff" stop-opacity="0.95"/><stop offset="1" stop-color="#fff" stop-opacity="0"/></linearGradient>
<path d="M2304.3,175.2 L2317.3,175.2 Q2312.3,178.2 2310.8,185.7 Q2309.3,178.2 2304.3,175.2 Z" fill="url(#g62)"/>
<rect x="2293.3" y="136.5" width="263.4" height="38.4" rx="5" fill="url(#gBubble)" stroke="#fafafa" stroke-width="2.2"/>
<text x="2306.38" y="162.70" font-size="19.33" font-weight="normal" textLength="238.53" lengthAdjust="spacingAndGlyphs" fill="#4c4c4c" >Set AI behaviour to search</text>
<linearGradient id="g63" x1="0" y1="0" x2="0" y2="1"><stop offset="0" stop-color="#fff" stop-opacity="0.95"/><stop offset="1" stop-color="#fff" stop-opacity="0"/></linearGradient>
<path d="M3130.8,192.7 L3143.8,192.7 Q3138.8,195.7 3137.3,203.2 Q3135.8,195.7 3130.8,192.7 Z" fill="url(#g63)"/>
<rect x="3119.1000000000004" y="152.70000000000002" width="249.19999999999973" height="39.69999999999998" rx="5" fill="url(#gBubble)" stroke="#fafafa" stroke-width="2.2"/>
<text x="3132.06" y="178.90" font-size="19.33" font-weight="normal" textLength="223.19" lengthAdjust="spacingAndGlyphs" fill="#4c4c4c" >Clear search timer event</text>
<linearGradient id="g64" x1="0" y1="0" x2="0" y2="1"><stop offset="0" stop-color="#fff" stop-opacity="0.95"/><stop offset="1" stop-color="#fff" stop-opacity="0"/></linearGradient>
<path d="M651.5,613 L664.5,613 Q659.5,616 658,623.5 Q656.5,616 651.5,613 Z" fill="url(#g64)"/>
<rect x="640.5999999999999" y="573.6999999999999" width="280.80000000000007" height="39.00000000000002" rx="5" fill="url(#gBubble)" stroke="#fafafa" stroke-width="2.2"/>
<text x="653.57" y="599.90" font-size="19.33" font-weight="normal" textLength="254.88" lengthAdjust="spacingAndGlyphs" fill="#4c4c4c" >Get the closest attack target</text>
<linearGradient id="g65" x1="0" y1="0" x2="0" y2="1"><stop offset="0" stop-color="#fff" stop-opacity="0.95"/><stop offset="1" stop-color="#fff" stop-opacity="0"/></linearGradient>
<path d="M1803.0,613.3 L1816.0,613.3 Q1811.0,616.3 1809.5,623.8 Q1808.0,616.3 1803.0,613.3 Z" fill="url(#g65)"/>
<rect x="1791.8" y="573.3" width="634.2000000000002" height="39.69999999999995" rx="5" fill="url(#gBubble)" stroke="#fafafa" stroke-width="2.2"/>
<text x="1804.88" y="599.50" font-size="19.33" font-weight="normal" textLength="606.35" lengthAdjust="spacingAndGlyphs" fill="#4c4c4c" >Set the new attack target then determine attack type and clear timer</text>
<linearGradient id="g66" x1="0" y1="0" x2="0" y2="1"><stop offset="0" stop-color="#fff" stop-opacity="0.95"/><stop offset="1" stop-color="#fff" stop-opacity="0"/></linearGradient>
<path d="M1803.0,888.2 L1816.0,888.2 Q1811.0,891.2 1809.5,898.7 Q1808.0,891.2 1803.0,888.2 Z" fill="url(#g66)"/>
<rect x="1791.8" y="849.9" width="228.4" height="38.00000000000002" rx="5" fill="url(#gBubble)" stroke="#fafafa" stroke-width="2.2"/>
<text x="1804.15" y="876.10" font-size="19.33" font-weight="normal" textLength="202.80" lengthAdjust="spacingAndGlyphs" fill="#4c4c4c" >Reset the attack target</text>
<text x="3230.56" y="1457.10" font-size="101.02" font-weight="bold" textLength="440.07" lengthAdjust="spacingAndGlyphs" fill="#fff" fill-opacity="0.16">BLUEPRINT</text>
<rect x="0" y="0" width="3684" height="58" fill="#000" fill-opacity="0.55"/>
<rect x="0" y="58" width="3684" height="3" fill="#0b0b0b" fill-opacity="0.85"/>
<linearGradient id="gTopSh" x1="0" y1="0" x2="0" y2="1"><stop offset="0" stop-color="#000" stop-opacity="0.3"/><stop offset="1" stop-color="#000" stop-opacity="0"/></linearGradient>
<linearGradient id="gRSh" x1="0" y1="0" x2="1" y2="0"><stop offset="0" stop-color="#000" stop-opacity="0"/><stop offset="1" stop-color="#000" stop-opacity="0.22"/></linearGradient><rect x="3662" y="0" width="22" height="1486" fill="url(#gRSh)"/>
<radialGradient id="gVig" cx="0.5" cy="0.5" r="0.7"><stop offset="0.6" stop-color="#000" stop-opacity="0"/><stop offset="1" stop-color="#000" stop-opacity="0.15"/></radialGradient><rect x="0" y="0" width="3684" height="1486" fill="url(#gVig)"/>
<linearGradient id="gLSh" x1="1" y1="0" x2="0" y2="0"><stop offset="0" stop-color="#000" stop-opacity="0"/><stop offset="1" stop-color="#000" stop-opacity="0.12"/></linearGradient><rect x="0" y="58" width="16" height="1428" fill="url(#gLSh)"/>
<linearGradient id="gBSh" x1="0" y1="0" x2="0" y2="1"><stop offset="0" stop-color="#000" stop-opacity="0"/><stop offset="1" stop-color="#000" stop-opacity="0.15"/></linearGradient><rect x="0" y="1440" width="3684" height="46" fill="url(#gBSh)"/>
<linearGradient id="gArL" x1="0" y1="0" x2="0.6" y2="1"><stop offset="0" stop-color="#ffffff"/><stop offset="0.5" stop-color="#e4f2f4"/><stop offset="1" stop-color="#c8dce4"/></linearGradient><linearGradient id="gArR" x1="0" y1="0" x2="0.6" y2="1"><stop offset="0" stop-color="#9a9a9a"/><stop offset="1" stop-color="#828282"/></linearGradient>
<path d="M15.5,28.7 L30,11.1 L30,21.2 L39.5,21.2 L39.5,35.6 L30,35.6 L30,45.5 Z" fill="#000" opacity="0.5" filter="url(#fShadow)"/>
<path d="M14.4,27.7 L28.9,10.1 L28.9,20.2 L38.4,20.2 L38.4,34.6 L28.9,34.6 L28.9,44.5 Z" fill="url(#gArL)"/>
<path d="M103,27.7 L88,10.1 L88,20.2 L77.7,20.2 L77.7,34.6 L88,34.6 L88,44.5 Z" fill="url(#gArR)"/>
<linearGradient id="gIco" x1="0" y1="0" x2="0.3" y2="1"><stop offset="0" stop-color="#eef2fc"/><stop offset="1" stop-color="#95a2d6"/></linearGradient>
<path d="M1615,23 V28 M1630.5,24 V29 M1620.5,19 H1625 M1620.8,34 H1624.7" stroke="#8890a8" stroke-width="1"/>
<rect x="1610" y="14" width="10.5" height="9.6" fill="url(#gIco)"/><rect x="1625" y="14.3" width="12" height="10" fill="url(#gIco)"/><rect x="1601" y="27.5" width="19.8" height="14.3" fill="url(#gIco)"/><rect x="1624.7" y="29" width="12" height="10.2" fill="url(#gIco)"/>
<text x="1656.64" y="39.00" font-size="28.49" font-weight="normal" textLength="345.23" lengthAdjust="spacingAndGlyphs" fill="#8e8e8e" >BTS_RangeAttackLocation</text>
<path d="M2013,20 L2024,29.5 L2013,39" stroke="#d8d8d8" stroke-width="2.6" fill="none"/>
<text x="2038.66" y="39.00" font-size="28.49" font-weight="normal" textLength="160.19" lengthAdjust="spacingAndGlyphs" fill="#8e8e8e" >Event Graph</text>
<text x="3574.25" y="35.00" font-size="32.85" font-weight="bold" textLength="68.10" lengthAdjust="spacingAndGlyphs" fill="#2e2e2e" >Zoom</text>
<text x="3651.70" y="35.00" font-size="32.85" font-weight="bold" textLength="27.42" lengthAdjust="spacingAndGlyphs" fill="#2e2e2e" >-3</text></svg></body></html>
